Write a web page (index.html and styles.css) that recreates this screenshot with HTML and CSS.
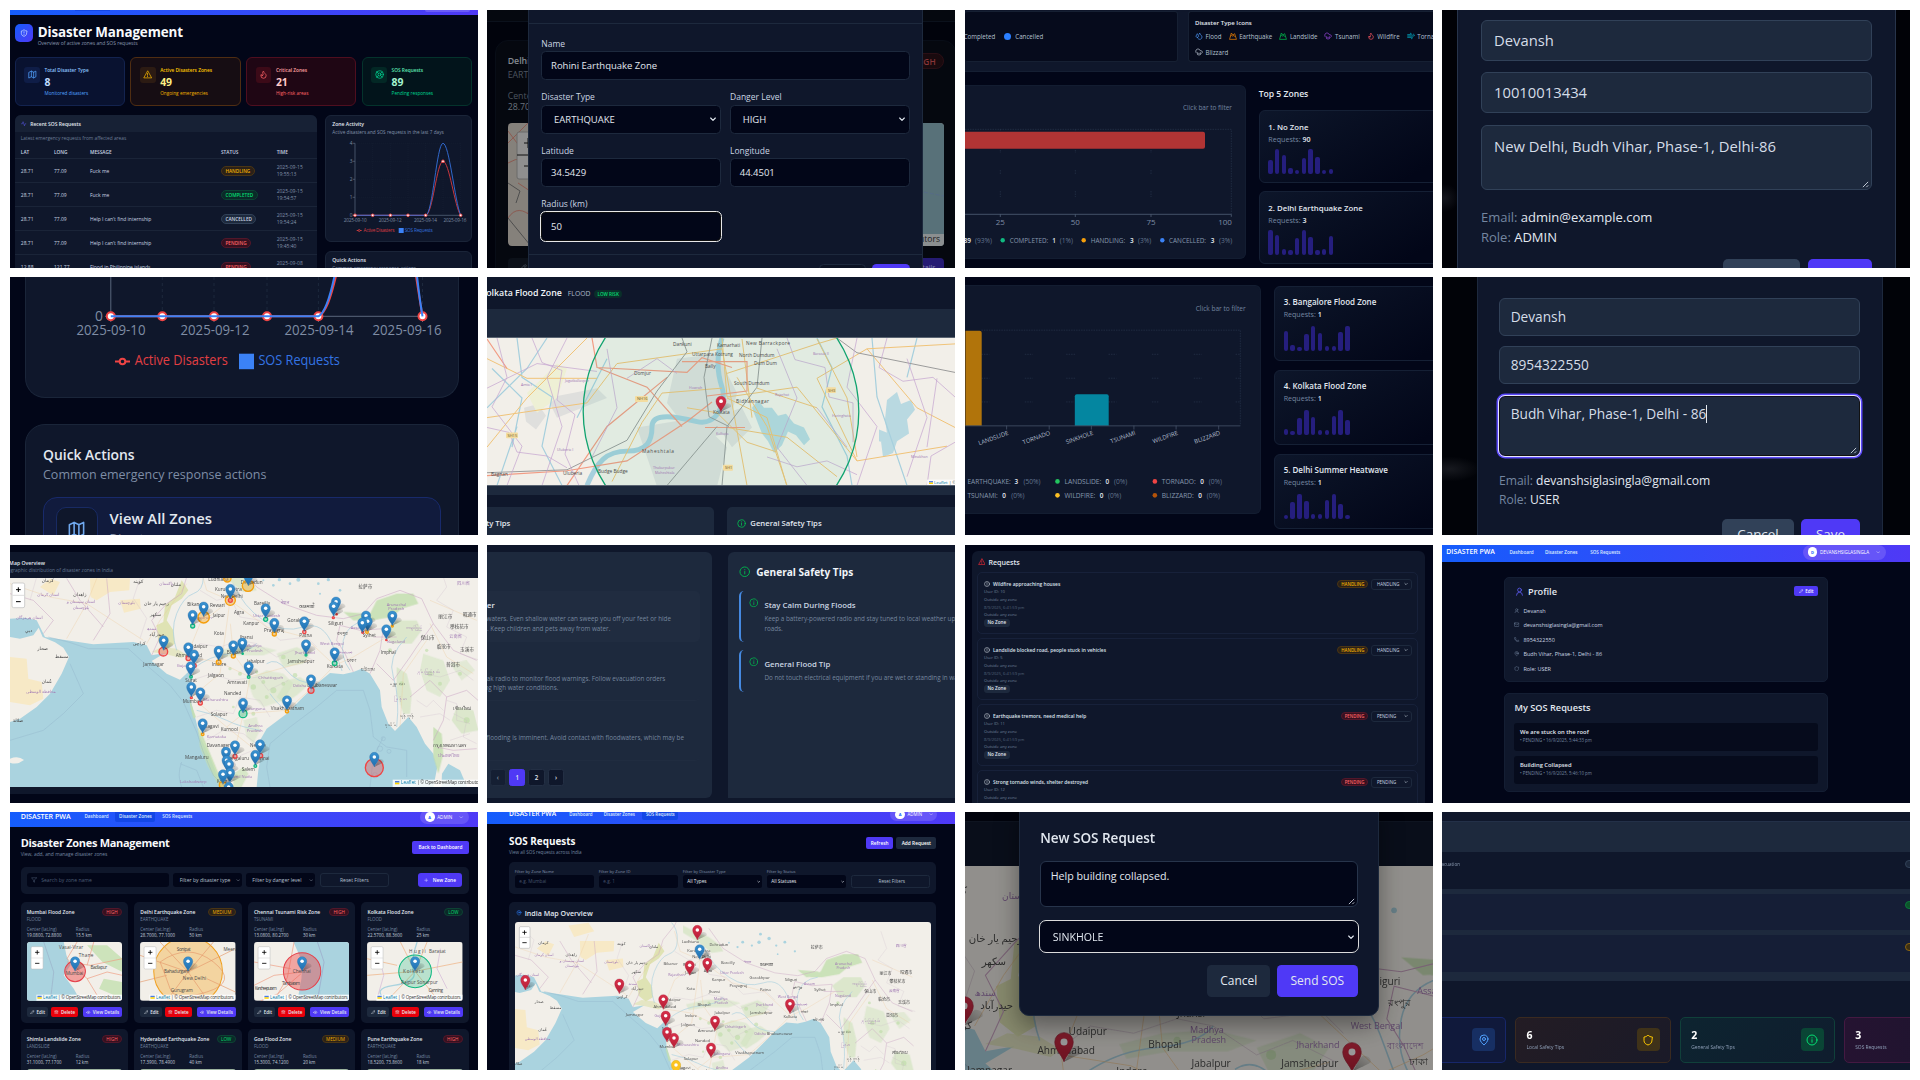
FILE: index.html
```html
<!DOCTYPE html>
<html lang="en">
<head>
<meta charset="utf-8">
<title>Disaster PWA</title>
<link rel="stylesheet" href="styles.css">
</head>
<body>
<svg class="defs" width="0" height="0" aria-hidden="true">
  <defs>
    <symbol id="i-map" viewBox="0 0 24 24"><path d="M3 6l6-3 6 3 6-3v15l-6 3-6-3-6 3zM9 3v15M15 6v15"/></symbol>
    <symbol id="i-alert" viewBox="0 0 24 24"><path d="M12 3L2 21h20zM12 9v5M12 17v.5"/></symbol>
    <symbol id="i-flame" viewBox="0 0 24 24"><path d="M8.5 14.5A2.5 2.5 0 0 0 11 12c0-1.4-.5-2-1-3-1-2.100-.2-4 2-6 .5 2.500 2 4.900 4 6.500s3 3.500 3 5.500a7 7 0 1 1-14 0c0-1.200.4-2.300 1-3a2.500 2.500 0 0 0 2.500 2.500z"/></symbol>
    <symbol id="i-buoy" viewBox="0 0 24 24"><circle cx="12" cy="12" r="10"/><circle cx="12" cy="12" r="4"/><path d="M5 5l4 4M15 9l4-4M15 15l4 4M9 15l-4 4"/></symbol>
    <symbol id="i-shieldalert" viewBox="0 0 24 24"><path d="M20 13c0 5-3.500 7.500-8 9-4.500-1.500-8-4-8-9V6c3 0 6-1.500 8-4 2 2.500 5 4 8 4zM12 8v4M12 16v.3"/></symbol>
    <symbol id="i-shield" viewBox="0 0 24 24"><path d="M20 13c0 5-3.500 7.500-8 9-4.500-1.500-8-4-8-9V6c3 0 6-1.500 8-4 2 2.500 5 4 8 4z"/></symbol>
    <symbol id="i-activity" viewBox="0 0 24 24"><path d="M22 12h-4l-3 9L9 3l-3 9H2"/></symbol>
    <symbol id="i-info" viewBox="0 0 24 24"><circle cx="12" cy="12" r="10"/><path d="M12 16.500v-5M12 7.500v.5"/></symbol>
    <symbol id="i-alertc" viewBox="0 0 24 24"><circle cx="12" cy="12" r="10"/><path d="M12 7v6M12 16.500v.3"/></symbol>
    <symbol id="i-user" viewBox="0 0 24 24"><circle cx="12" cy="8" r="5"/><path d="M4 22a8 8 0 0 1 16 0"/></symbol>
    <symbol id="i-mail" viewBox="0 0 24 24"><rect x="2" y="4" width="20" height="16" rx="2"/><path d="M2 7l10 6 10-6"/></symbol>
    <symbol id="i-phone" viewBox="0 0 24 24"><path d="M22 17v3a2 2 0 0 1-2 2C11 21 3 13 2 4a2 2 0 0 1 2-2h3l2 6-2 2a14 14 0 0 0 7 7l2-2z"/></symbol>
    <symbol id="i-pin" viewBox="0 0 24 24"><path d="M20 10c0 5-5.500 10-8 12-2.500-2-8-7-8-12a8 8 0 0 1 16 0z"/><circle cx="12" cy="10" r="3"/></symbol>
    <symbol id="i-pencil" viewBox="0 0 24 24"><path d="M17 3a2.800 2.800 0 0 1 4 4L7.500 20.500 2 22l1.500-5.500zM15 5l4 4"/></symbol>
    <symbol id="i-trash" viewBox="0 0 24 24"><path d="M3 6h18M19 6v14a2 2 0 0 1-2 2H7a2 2 0 0 1-2-2V6M8 6V4a2 2 0 0 1 2-2h4a2 2 0 0 1 2 2v2M10 11v6M14 11v6"/></symbol>
    <symbol id="i-eye" viewBox="0 0 24 24"><path d="M2 12c4-9 16-9 20 0-4 9-16 9-20 0z"/><circle cx="12" cy="12" r="3"/></symbol>
    <symbol id="i-plus" viewBox="0 0 24 24"><path d="M4 12h16M12 4v16"/></symbol>
    <symbol id="i-filter" viewBox="0 0 24 24"><path d="M22 3H2l8 9.500V19l4 2v-8.500z"/></symbol>
    <symbol id="i-drops" viewBox="0 0 24 24"><path d="M7 16.300c2.200 0 4-1.800 4-4C11 9.500 7.500 8 7 5c-.5 3-4 4.500-4 7.300 0 2.200 1.800 4 4 4zM12.600 6.600A11 11 0 0 0 14 3c.5 2.500 2 5 4 6.500s3 3.500 3 5.500a7 7 0 0 1-12 5"/></symbol>
    <symbol id="i-mount" viewBox="0 0 24 24"><path d="M2 21L7 3l5 6 5-4 5 16zM5 12l3-3 3 4 3-3 4 4"/></symbol>
    <symbol id="i-cloud" viewBox="0 0 24 24"><path d="M4 14.900A7 7 0 1 1 15.700 8h1.800a4.500 4.500 0 0 1 2.500 8.200M16 14v6M8 14v6M12 16v6"/></symbol>
    <symbol id="i-wind" viewBox="0 0 24 24"><path d="M17.700 7.700A2.500 2.500 0 1 1 19.500 12H2M9.600 4.600A2 2 0 1 1 11 8H2M12.600 19.400A2 2 0 1 0 14 16H2"/></symbol>
    <symbol id="i-chev" viewBox="0 0 24 24"><path d="M5 9l7 7 7-7"/></symbol>
    <linearGradient id="gb" x1="0" y1="0" x2="0" y2="1"><stop offset="0" stop-color="#3a93d2"/><stop offset="1" stop-color="#1f6dad"/></linearGradient>
    <linearGradient id="gr" x1="0" y1="0" x2="0" y2="1"><stop offset="0" stop-color="#d8304a"/><stop offset="1" stop-color="#b51f36"/></linearGradient>
    <linearGradient id="gs" x1="0" y1="1" x2="1" y2="0"><stop offset="0" stop-opacity=".4"/><stop offset="1" stop-opacity=".05"/></linearGradient>
    <g id="shade"><path d="M0 0C6-6 8-16 16-24A10 8 0 0 1 28-14C20-9 8-4 0 0z" fill="url(#gs)"/></g>
    <g id="pb"><use href="#shade"/><path d="M0 0C-3-10-14-18-14-30A14 14 0 0 1 14-30C14-18 3-10 0 0z" fill="url(#gb)" stroke="#2767a0" stroke-width="1"/><circle cy="-30" r="5.300" fill="#fff"/></g>
    <g id="pr"><use href="#shade"/><path d="M0 0C-3-10-14-18-14-30A14 14 0 0 1 14-30C14-18 3-10 0 0z" fill="url(#gr)" stroke="#a3213a" stroke-width="1"/><circle cy="-30" r="5.300" fill="#fff"/></g>
    <g id="py"><use href="#shade"/><path d="M0 0C-3-10-14-18-14-30A14 14 0 0 1 14-30C14-18 3-10 0 0z" fill="#fcc41f" stroke="#c89a10" stroke-width="1"/><circle cy="-30" r="5.300" fill="#fff"/></g>
    <g id="zoomctl"><rect x="12" y="14" width="36" height="67" rx="4" fill="#fff" stroke="#bbb" stroke-width="1.500"/><path d="M12 48h36" stroke="#ccc" stroke-width="1.500"/><path d="M24 31h13M30.500 24.500v13M24 64h13" stroke="#000" stroke-width="2.500"/></g>
    <g id="attr"><rect x="28" y="158" width="258" height="18" fill="#fff" opacity=".85"/><path d="M31 161h13v4.500h-13z" fill="#4c7be1"/><path d="M31 165.500h13v4.500h-13z" fill="#ffd500"/><text x="48" y="171" font-size="13.500" fill="#0078a8" textLength="42">Leaflet</text><text x="93" y="171" font-size="13.500" fill="#333" textLength="188">| © OpenStreetMap contributors</text></g>

    <g id="india">
      <rect x="-100" y="-50" width="1700" height="1000" fill="#f2efe9"/>
      <path d="M-80 200L30 235 75 232 110 240 135 290 200 300 280 312 400 305 440 315 455 345 495 338 455 362 500 400 540 418 570 390 578 410 570 440 572 480 585 530 600 590 630 650 665 740 700 830 740 800 770 740 775 690 783 640 780 600 800 565 860 520 900 480 950 430 990 398 1030 402 1060 395 1085 385 1110 400 1140 450 1145 500 1165 550 1185 572 1225 530 1250 560 1275 610 1300 640 1312 680 1300 740 1290 900 -100 900-100 540 30 545 60 535 110 500 150 460 185 400 207 350 190 322 165 306 128 290 116 262 100 285 60 295 30 290-80 300z" fill="#aad3df"/>
      <path d="M1322 780L1326 700 1345 670 1380 690 1410 760z" fill="#aad3df"/>
      <path d="M30 655q25-10 42 4-20 16-42 8z" fill="#f2efe9"/>
      <g fill="#f7e9c6">
        <path d="M270 114L390 114 388 150 330 155 290 180 272 170z"/><path d="M360 180l60-5 2 30-50 12z"/><path d="M30 350l50 5 5 60 40 10 5 50-40 20-60-10z"/><path d="M120 140l30-25 30 10-20 40zM230 60l70-10 20 30-70 20z"/>
      </g>
      <path d="M545 120l20 30-20 25-30 20-15 45 20 30 5 40-25 15-25-20-5-50 20-10 5-50 30-25z" fill="#dfe3b4"/>
      <path d="M455 335l30-15 45 5 30 18-15 10-50-12z" fill="#dfe3b4" opacity=".7"/>
      <g fill="#c4dfb0" opacity=".85">
        <path d="M1070 240l40-20 20-40 60-20 50 0 15 30-50 15-30 25-60 10z"/><path d="M1150 270l40-30 60 0 15 30-30 40-60 0z" opacity=".6"/><path d="M1030 215l70 5 20 15-60 5z"/>
        <path d="M630 60l40 20 50 20 40 30 10 20-40 5-50-40-50-30z" opacity=".6"/>
        <path d="M595 560l15 30 25 60 25 60 20 30-15 10-40-70-25-60z"/><path d="M700 700l30-20 15 20-20 40-25 5z" opacity=".7"/>
        <path d="M740 420l60-30 50 10 30 30-30 50-60 20-30-30z" opacity=".4"/><path d="M830 340l60-20 40 20-20 30-60 10z" opacity=".5"/>
        <path d="M640 335l60-15 70-5 60 15-40 15-80 0-60 10z" opacity=".45"/><path d="M860 420l40-10 30 20-40 35-40 25-20-20z" opacity=".5"/><path d="M730 540l40-10 10 40-20 40-20-20z" opacity=".4"/>
        <path d="M1190 380l30 20 15 60-5 60-20 0-20-60z" opacity=".6"/><path d="M1270 340l60 20 20 60-30 50-40-20-20-60z" opacity=".45"/><path d="M1300 560l25 20 5 60-15 60-15-50z"/><path d="M1370 500l50 10 15 60-50 10-30-40z" opacity=".6"/><path d="M1350 370l50-10 25 30-40 30z" opacity=".4"/>
        <path d="M570 480l18 50-8 5-10-40z"/>
      </g>
      <g fill="#bcdca5" opacity=".6"><circle cx="760" cy="440" r="8"/><circle cx="790" cy="425" r="6"/><circle cx="820" cy="450" r="9"/><circle cx="800" cy="470" r="6"/><circle cx="850" cy="430" r="6"/><circle cx="770" cy="395" r="5"/><circle cx="690" cy="385" r="5"/><circle cx="720" cy="400" r="6"/><circle cx="850" cy="350" r="7"/><circle cx="885" cy="405" r="7"/><circle cx="700" cy="500" r="4"/><circle cx="760" cy="520" r="6"/><circle cx="1205" cy="430" r="7"/><circle cx="1290" cy="400" r="8"/><circle cx="1320" cy="430" r="6"/><circle cx="1400" cy="540" r="9"/><circle cx="1380" cy="400" r="6"/><circle cx="1280" cy="330" r="5"/><circle cx="1170" cy="330" r="6"/><circle cx="720" cy="330" r="5"/></g>
      <g fill="none" stroke="#abd0df" stroke-width="2.200">
        <path d="M530 330q-20-60 0-110t50-60 30-50-20-60M700 130q30 70 90 110t120 20 90 60 25 70M1100 240q-60 10-70 60t20 90M580 385q50-40 110-45t80-30M780 570q-60-10-100-30t-90-30M950 430q-60 0-90-40t-60-20M1190 560q10-90-10-150t40-120M870 520q-40-30-60-60"/>
      </g>
      <g fill="#aad3df"><circle cx="820" cy="135" r="4"/><circle cx="838" cy="118" r="5"/><circle cx="870" cy="130" r="4"/><circle cx="895" cy="118" r="6"/><circle cx="790" cy="120" r="3"/><circle cx="930" cy="105" r="6"/><circle cx="955" cy="130" r="4"/><circle cx="985" cy="118" r="5"/><circle cx="900" cy="90" r="5"/><circle cx="1020" cy="150" r="4"/><circle cx="960" cy="160" r="3"/></g>
      <g fill="none" stroke="#efc48d" stroke-width="1.100" opacity=".8">
        <path d="M575 470L660 400 690 180M690 180L800 260 913 290 1004 375M575 470L680 560 780 640M690 180L600 250 560 350 575 470M680 560L730 520 860 510 950 430 1004 375M656 365L750 410 930 360M700 650L730 520 750 410M690 180L620 150 600 80M440 310L480 240 560 130M30 130L150 170 260 190 430 300M200 295L260 190 300 90M1004 375L1060 350 1160 290M1290 250L1340 350 1420 400M1200 560L1210 400 1280 300M1290 180L1430 240M750 410L700 340 691 250M560 350L656 365"/>
      </g>
      <g fill="none" stroke="#c9a3c2" stroke-width="1.500">
        <path d="M455 345L480 290 455 240 500 190 545 160 560 110 600 60 620 20M720 70L770 140 850 190 950 225 1030 235 1090 220 1130 175 1200 150 1265 175M1060 395L1035 340 1010 300 1020 255 1080 270 1150 265 1140 330 1110 400M1265 175L1300 250 1250 320 1230 350 1180 420 1130 370M1300 250L1360 330 1430 360M1230 470L1290 420 1340 470 1330 540 1300 600M320 114L330 220 280 300M200 114L240 180 310 260M30 160L100 180 160 240 130 280M1340 470L1400 450 1434 480M1120 290L1190 290M1310 620l50 10 70-5"/>
      </g>
      <g fill="none" stroke="#c8b4c6" stroke-width=".9" opacity=".85">
        <path d="M600 150l50 30 40-10 30 60 60 10 60 60 80-10 30 30M560 340l40-30 60 10 60-20 50 10 60 40 50-20 60 30M575 420l60-20 60 20 80-10 30 40 60-30M590 530l60-20 50 10 20-50 60 10 30 50M620 600l50-30 60 10 40 30M690 700l20-50 50-20M1320 80l20 60-30 40 50 30-20 50 60 30-20 50 60 20M1250 480l30 20 20-20 30 30M1260 530l60-10 30 20M1360 520l40 20-10 50 40 20M60 60l50 50-20 70M420 114l-20 60 40 60-20 60M1340 480l30 10 0 50 40 10M1350 600l60-20M1270 400l50 10 60-20 40 30"/>
      </g>
      <g fill="none" stroke="#92b5cb" stroke-width="1.500" opacity=".8">
        <path d="M145 290l60 15 60 20 120 0 55 50 70 60 40 50 40 90 20 60 30 70 60 60M210 370l40 90-60 60-60 50-100 30M810 740l-10-60 10-70 60-50 80-60 60-50 80 0 20 60 10 80 40 30 60 10 0 80M540 670l50 20 20 50M545 665q-15 40 0 75M1110 740l10-90 30-60"/>
        <circle cx="1150" cy="595" r="6"/><circle cx="1167" cy="633" r="6"/><circle cx="1140" cy="625" r="8"/><circle cx="1125" cy="705" r="8"/>
      </g>
      <g class="city">
        <text x="625" y="122">Ludhiana</text><text x="645" y="152">Kurukshetra</text><text x="662" y="173">New Delhi</text><text x="722" y="131">Dehradun</text><text x="562" y="196">Bikaner</text><text x="630" y="200">Rewari</text><text x="702" y="222">Agra</text><text x="638" y="230">Jaipur</text><text x="730" y="254">Kanpur</text><text x="762" y="194">Bareilly</text><text x="792" y="276">Prayagraj</text><text x="862" y="245">Gorakhpur</text><text x="898" y="289">Patna</text><text x="642" y="284">Kota</text><text x="680" y="341">Bhopal</text><text x="570" y="322">Udaipur</text><text x="527" y="349">Ahmedabad</text><text x="430" y="377">Jamnagar</text><text x="636" y="378">Indore</text><text x="740" y="367">Jabalpur</text><text x="864" y="367">Jamshedpur</text><text x="980" y="382">Kolkata</text><text x="624" y="410">Jalgaon</text><text x="556" y="424">Surat</text><text x="682" y="432">Amravati</text><text x="672" y="465">Nanded</text><text x="548" y="488">Mumbai</text><text x="812" y="508">Visakhapatnam</text><text x="922" y="441">Bhubaneswar</text><text x="632" y="528">Solapur</text><text x="602" y="562">Belagavi</text><text x="662" y="571">Kurnool</text><text x="620" y="621">Davanagere</text><text x="750" y="620">Nellore</text><text x="555" y="656">Mangaluru</text><text x="725" y="691">Salem</text><text x="680" y="660">Bengaluru</text><text x="755" y="660">Chennai</text><text x="650" y="729">Kochi</text><text x="985" y="253">Siliguri</text><text x="1088" y="289">Sylhet</text><text x="720" y="297">Jhansi</text><text x="1300" y="619">กรุงเทพมหานคร</text>
        <text x="125" y="124">کرمان</text><text x="220" y="168">زاهدان</text><text x="400" y="128">کویته</text><text x="512" y="137">ملتان</text><text x="432" y="194">رحیم یار خان</text><text x="450" y="226">سکھر</text><text x="448" y="286">حیدرآباد</text><text x="398" y="314">کراچی</text><text x="75" y="276">دبي</text><text x="112" y="330">صحار</text><text x="165" y="352">مسقط</text><text x="125" y="427">عُمان</text><text x="38" y="546">صلالة</text>
        <text x="1315" y="232">丽江市</text><text x="1388" y="228">昭通市</text><text x="1350" y="262">攀枝花市</text><text x="1262" y="296">保山市</text><text x="1310" y="322">临沧市</text><text x="1380" y="332">玉溪市</text><text x="1338" y="378">普洱市</text><text x="1075" y="143">拉萨市</text><text x="898" y="202">काठमाडौं</text><text x="1012" y="283">রংপুর</text><text x="1040" y="364">ঢাকা</text><text x="1082" y="392">চট্টগ্রাম</text><text x="1142" y="342">Imphal</text><text x="1166" y="434">မန္တလေး</text><text x="1200" y="530">ရန်ကုန်</text><text x="1155" y="558">ပုသိမ်</text><text x="1360" y="508">เชียงใหม่</text>
      </g>
      <g class="state">
        <text x="478" y="135">پاکستان</text><text x="200" y="188">استان سیستان و</text><text x="218" y="206">بلوچستان</text><text x="112" y="166">استان کرمان</text><text x="48" y="235">استان هرمزگان</text><text x="355" y="192">بلوچستان</text><text x="842" y="190">नेपाल</text><text x="760" y="230">Uttar Pradesh</text><text x="775" y="416">Chhattisgarh</text><text x="610" y="481">Maharashtra</text><text x="620" y="592">Karnataka</text><text x="745" y="560">Andhra</text><text x="740" y="574">Pradesh</text><text x="738" y="320">Madhya</text><text x="740" y="334">Pradesh</text><text x="878" y="441">Odisha</text><text x="885" y="340">Jharkhand</text><text x="960" y="314">West Bengal</text><text x="1010" y="342">বাংলাদেশ</text><text x="1160" y="196">Arunachal</text><text x="1165" y="210">Pradesh</text><text x="1052" y="266">Assam</text><text x="1215" y="267">ကချင်ပြည်</text><text x="1160" y="308">Nagaland</text><text x="1182" y="480">မြန်မာ</text><text x="530" y="380">Gujarat</text><text x="735" y="510">Telangana</text><text x="690" y="712">Tamil Nadu</text><text x="540" y="727">Lakshadweep</text><text x="578" y="236">Rajasthan</text><text x="78" y="458">محافظة الوسطى</text><text x="1348" y="292">云南省</text><text x="1372" y="135">四川省</text><text x="1250" y="398">ရှမ်းပြည်နယ်</text><text x="1314" y="650">ประเทศไทย</text><text x="440" y="268">سندھ</text>
      </g>
    </g>
  </defs>
</svg>

<main class="board">

<!-- Dashboard -->
<section class="tile t1">
  <div class="strip"><i class="strip-on"></i><i class="strip-pill"></i></div>
  <header class="t1-head"><span class="logo"><svg class="ic"><use href="#i-shieldalert"/></svg></span><div><h1>Disaster Management</h1><p>Overview of active zones and SOS requests</p></div></header>
  <div class="stats">
    <div class="stat blue"><span><svg class="ic"><use href="#i-map"/></svg></span><div><b>Total Disaster Type</b><strong>8</strong><em>Monitored disasters</em></div></div>
    <div class="stat amber"><span><svg class="ic"><use href="#i-alert"/></svg></span><div><b>Active Disasters Zones</b><strong>49</strong><em>Ongoing emergencies</em></div></div>
    <div class="stat red"><span><svg class="ic"><use href="#i-flame"/></svg></span><div><b>Critical Zones</b><strong>21</strong><em>High-risk areas</em></div></div>
    <div class="stat green"><span><svg class="ic"><use href="#i-buoy"/></svg></span><div><b>SOS Requests</b><strong>89</strong><em>Pending responses</em></div></div>
  </div>
  <div class="t1-cols">
    <div class="recent">
      <h2><svg class="ic"><use href="#i-activity"/></svg>Recent SOS Requests</h2>
      <p>Latest emergency requests from affected areas</p>
      <div class="tr th"><span>LAT</span><span>LONG</span><span>MESSAGE</span><span>STATUS</span><span>TIME</span></div>
      <div class="tr"><span>28.71</span><span>77.09</span><span>Fuck me</span><span><i class="pill p-h">HANDLING</i></span><time>2025-09-15<br>19:55:13</time></div>
      <div class="tr"><span>28.71</span><span>77.09</span><span>Fuck me</span><span><i class="pill p-c">COMPLETED</i></span><time>2025-09-15<br>19:54:57</time></div>
      <div class="tr"><span>28.71</span><span>77.09</span><span>Help I can't find internship</span><span><i class="pill p-x">CANCELLED</i></span><time>2025-09-15<br>19:54:24</time></div>
      <div class="tr"><span>28.71</span><span>77.09</span><span>Help I can't find internship</span><span><i class="pill p-p">PENDING</i></span><time>2025-09-15<br>19:45:40</time></div>
      <div class="tr"><span>12.88</span><span>121.77</span><span>Flood in Philippine islands</span><span><i class="pill p-p">PENDING</i></span><time>2025-09-08<br>10:12:03</time></div>
    </div>
    <div class="side">
      <div class="panel act">
        <h3>Zone Activity</h3><p>Active disasters and SOS requests in the last 7 days</p>
        <svg class="chart" viewBox="315.300 128 146.700 100" width="146.700" height="100">
          <g stroke="#1b2639" stroke-width=".4" stroke-dasharray="1 1" fill="none"><path d="M344 132.300H450M344 150.300H450M344 168.300H450M344 186.300H450M362 132V204M379.700 132V204M397.300 132V204M415 132V204M432.300 132V204M450 132V204"/></g>
          <path d="M342 132.300h2.300v72H450M342 150.300h2.300M342 168.300h2.300M342 186.300h2.300M342 204.300h2.300" fill="none" stroke="#5c6b82" stroke-width=".7"/>
          <path d="M344.300 204.300H415C422 204 426 150.300 432.300 150.300S444 196 450 204.300" fill="none" stroke="#dc3a40" stroke-width=".9"/>
          <path d="M344.300 204.300H415C422 204 426 132.300 432.300 132.300S444 190 450 204.300" fill="none" stroke="#3470dd" stroke-width=".9"/>
          <g fill="#fff" stroke="#ef4444" stroke-width=".9"><circle cx="344.300" cy="204.300" r="1.300"/><circle cx="362" cy="204.300" r="1.300"/><circle cx="379.700" cy="204.300" r="1.300"/><circle cx="397.300" cy="204.300" r="1.300"/><circle cx="415" cy="204.300" r="1.300"/><circle cx="432.300" cy="150.300" r="1.300"/><circle cx="450" cy="204.300" r="1.300"/></g>
          <g fill="#7d8ca3" font-size="4.700"><text x="339" y="134">4</text><text x="339" y="152">3</text><text x="339" y="170">2</text><text x="339" y="188">1</text><text x="339" y="206">0</text><text x="333" y="211" textLength="23">2025-09-10</text><text x="368" y="211" textLength="23">2025-09-12</text><text x="403.300" y="211" textLength="23">2025-09-14</text><text x="432.700" y="211" textLength="23">2025-09-16</text></g>
          <path d="M346 219.500h5" stroke="#ef4444" stroke-width=".8"/><circle cx="348.500" cy="219.500" r="1" fill="#0f172b" stroke="#ef4444" stroke-width=".7"/>
          <text x="352.700" y="221" font-size="4.700" fill="#d63c42" textLength="31">Active Disasters</text><rect x="388" y="217" width="5" height="5" fill="#3b82f6"/><text x="394" y="221" font-size="4.700" fill="#3470dd" textLength="28">SOS Requests</text>
        </svg>
      </div>
      <div class="panel qa"><h3>Quick Actions</h3><p>Common emergency response actions</p></div>
    </div>
  </div>
</section>

<!-- New zone dialog -->
<section class="tile t2">
  <div class="t2-bar"></div>
  <div class="t2-card">
    <div class="t2-row"><b>Delhi Zone</b><i class="pill">HIGH</i></div>
    <p>EARTHQUAKE</p><p class="gap">Center</p><p class="v">28.7041</p>
    <svg width="436" height="123" viewBox="0 0 436 123" class="t2-map"><rect width="436" height="123" fill="#85817b"/><rect x="300" width="136" height="123" fill="#587179"/><path d="M0 20L20 0M0 40q15-10 30 5M0 95q10-15 25 0M0 8l15 20M10 60l15 10-5 20" fill="none" stroke="#8d5046" stroke-width=".8"/><path d="M0 95L22 122M0 60l12 8-4 12" stroke="#4e4e4e" fill="none"/><path d="M410 68l26 5" stroke="#56698a" stroke-width=".8" stroke-dasharray="4 2"/><rect x="9" y="9" width="26" height="47" rx="2" fill="#8f8f8f" stroke="#6a6a6a"/><path d="M9 32h26M16 20h9M16 43h9M20 15v10" stroke="#111" stroke-width="1"/><rect x="380" y="111" width="56" height="12" fill="#8b8f90"/><text x="432" y="119" text-anchor="end" font-size="8.500" fill="#202020">contributors</text></svg>
    <div class="t2-foot"><i><svg class="ic"><use href="#i-pencil"/></svg></i><i class="v">View Details</i></div>
  </div>
  <div class="dialog d2">
    <div class="d2-head"></div>
    <div class="d2-body">
      <label class="wide">Name<span>Rohini Earthquake Zone</span></label>
      <label>Disaster Type<span class="sel">EARTHQUAKE<svg class="ic"><use href="#i-chev"/></svg></span></label>
      <label>Danger Level<span class="sel">HIGH<svg class="ic"><use href="#i-chev"/></svg></span></label>
      <label>Latitude<span>34.5429</span></label>
      <label>Longitude<span>44.4501</span></label>
      <label>Radius (km)<span class="focus">50</span></label>
    </div>
    <div class="d2-foot"><i></i><i class="go"></i></div>
  </div>
</section>

<!-- SOS status chart -->
<section class="tile t3">
  <div class="legendbar">
    <div class="lbox lb1"><span class="done">Completed</span><i></i><span>Cancelled</span></div>
    <div class="lbox lb2"><b>Disaster Type Icons</b>
      <div class="types">
        <span><svg class="ic" color="#4f9bff"><use href="#i-drops"/></svg>Flood</span><span><svg class="ic" color="#fe8a00"><use href="#i-mount"/></svg>Earthquake</span><span><svg class="ic" color="#00c950"><use href="#i-mount"/></svg>Landslide</span><span><svg class="ic" color="#a64dee"><use href="#i-cloud"/></svg>Tsunami</span><span><svg class="ic" color="#fb5660"><use href="#i-flame"/></svg>Wildfire</span><span><svg class="ic" color="#00c3dc"><use href="#i-wind"/></svg>Tornado</span>
      </div>
      <div class="types"><span><svg class="ic" color="#cad5e2"><use href="#i-cloud"/></svg>Blizzard</span></div>
    </div>
  </div>
  <div class="t3-main">
    <div class="chartcard">
      <svg viewBox="0 75 281 174" width="281" height="174">
        <text x="267" y="99.700" text-anchor="end" font-size="6.400" fill="#7486a0" textLength="49" lengthAdjust="spacingAndGlyphs">Click bar to filter</text>
        <path d="M0 119.300H266.300V204M35.300 119v2M35.300 140v3M35.300 160v5M35.300 181v6M110.300 119v2M110.300 140v3M110.300 160v5M110.300 181v6M186 119v2M186 140v3M186 160v5M186 181v6" fill="none" stroke="#2b3950" stroke-width=".6" stroke-dasharray="1.500 1"/>
        <path d="M0 121.700h238a2 2 0 0 1 2 2v13a2 2 0 0 1-2 2H0z" fill="#b13434"/>
        <path d="M0 204.300H266.300v2.500M35.300 204v3M110.300 204v3M186 204v3" fill="none" stroke="#4a586e" stroke-width=".9"/>
        <g fill="#7e8da5" font-size="8" text-anchor="middle"><text x="35.300" y="215">25</text><text x="110.300" y="215">50</text><text x="186" y="215">75</text><text x="260" y="215">100</text></g>
        <g font-size="6.400" fill="#8797ae"><text x="-1.500" y="232.700" fill="#e6ebf2" font-weight="600" textLength="7.500" lengthAdjust="spacingAndGlyphs">89</text><text x="10" y="232.700" fill="#62748e" textLength="17" lengthAdjust="spacingAndGlyphs">(93%)</text><circle cx="37.700" cy="230.300" r="2.200" fill="#10b981"/><text x="44.700" y="232.700" textLength="38.500" lengthAdjust="spacingAndGlyphs">COMPLETED:</text><text x="87.300" y="232.700" fill="#e6ebf2" font-weight="600">1</text><text x="94.700" y="232.700" fill="#62748e" textLength="13.300" lengthAdjust="spacingAndGlyphs">(1%)</text><circle cx="118.700" cy="230.300" r="2.200" fill="#f59e0b"/><text x="125.700" y="232.700" textLength="34.500" lengthAdjust="spacingAndGlyphs">HANDLING:</text><text x="165" y="232.700" fill="#e6ebf2" font-weight="600">3</text><text x="173" y="232.700" fill="#62748e" textLength="13.300" lengthAdjust="spacingAndGlyphs">(3%)</text><circle cx="197.300" cy="230.300" r="2.200" fill="#3b82f6"/><text x="204" y="232.700" textLength="37" lengthAdjust="spacingAndGlyphs">CANCELLED:</text><text x="245.700" y="232.700" fill="#e6ebf2" font-weight="600">3</text><text x="254" y="232.700" fill="#62748e" textLength="13.300" lengthAdjust="spacingAndGlyphs">(3%)</text></g>
      </svg>
    </div>
    <div class="zones">
      <h2>Top 5 Zones</h2>
      <div class="zone"><b>1. No Zone</b><p>Requests: <strong>90</strong></p><div class="bars"><i style="height:14px"></i><i style="height:24.700px"></i><i style="height:19.300px"></i><i style="height:6px"></i><i style="height:4px"></i><i style="height:16px"></i><i style="height:24.700px"></i><i style="height:17px"></i><i style="height:4px"></i><i style="height:5px"></i></div></div>
      <div class="zone"><b>2. Delhi Earthquake Zone</b><p>Requests: <strong>3</strong></p><div class="bars"><i style="height:25.300px"></i><i style="height:20px"></i><i style="height:6px"></i><i style="height:4.700px"></i><i style="height:17px"></i><i style="height:25.300px"></i><i style="height:18px"></i><i style="height:5px"></i><i style="height:5.700px"></i><i style="height:19px"></i></div></div>
    </div>
  </div>
</section>

<!-- Edit profile, admin -->
<section class="tile t4">
  <div class="dialog pf"><div class="inp">Devansh</div><div class="inp">10010013434</div><div class="inp area">New Delhi, Budh Vihar, Phase-1, Delhi-86<svg class="grip" viewBox="0 0 8 8"><path d="M1 7l6-6M5 7l2-2"/></svg></div>
    <p>Email: <b>admin@example.com</b></p><p>Role: <b>ADMIN</b></p><div class="acts"><i></i><i class="go"></i></div></div>
</section>

<!-- Activity detail -->
<section class="tile t5">
  <div class="panel5 up">
    <svg viewBox="15 0 434 120" width="434" height="120">
      <path d="M152.300 0v39M257 0v39M204 0v39M308.400 0v39M412.500 0v39" stroke="#1d293d" stroke-width="1" stroke-dasharray="3 3"/>
      <path d="M100.800 0v45M95 39.300H412.500V45M204 39v6M308.400 39v6" fill="none" stroke="#59677c" stroke-width="1"/>
      <path d="M100.800 39.300H308.400C316 36 321 20 326 -1M406 -1Q410 25 412.500 39.300" fill="none" stroke="#ef4444" stroke-width="2"/>
      <g fill="#fff" stroke="#ef4444" stroke-width="2"><circle cx="100.800" cy="39.300" r="4"/><circle cx="152.300" cy="39.300" r="4"/><circle cx="204" cy="39.300" r="4"/><circle cx="257" cy="39.300" r="4"/><circle cx="308.400" cy="39.300" r="4"/><circle cx="412.500" cy="39.300" r="4"/></g>
      <path d="M100.800 39.300H308.400C315 36 320 20 324.500 -1M407 -1Q410 25 412.500 39.300" fill="none" stroke="#3b82f6" stroke-width="2"/>
      <g fill="#7f8da4" font-size="13.800"><text x="85" y="43.500">0</text><text x="66.500" y="57.500" textLength="69" lengthAdjust="spacingAndGlyphs">2025-09-10</text><text x="170.500" y="57.500" textLength="69" lengthAdjust="spacingAndGlyphs">2025-09-12</text><text x="274.500" y="57.500" textLength="69" lengthAdjust="spacingAndGlyphs">2025-09-14</text><text x="362.500" y="57.500" textLength="69" lengthAdjust="spacingAndGlyphs">2025-09-16</text></g>
      <path d="M105 84.500h15" stroke="#ef4444" stroke-width="2"/><circle cx="112.500" cy="84.500" r="2.800" fill="#0f172b" stroke="#ef4444" stroke-width="2"/>
      <text x="124.700" y="88" font-size="13.600" fill="#e13f43" textLength="93" lengthAdjust="spacingAndGlyphs">Active Disasters</text><rect x="229" y="76.700" width="15" height="15.500" fill="#3b82f6"/><text x="248.400" y="88" font-size="13.600" fill="#3474e4" textLength="81.500" lengthAdjust="spacingAndGlyphs">SOS Requests</text>
    </svg>
  </div>
  <div class="panel5 down"><h3>Quick Actions</h3><p>Common emergency response actions</p><div class="qbtn"><span><svg class="ic"><use href="#i-map"/></svg></span><div><b>View All Zones</b><em>Disaster zones</em></div></div></div>
</section>

<!-- Zone detail map -->
<section class="tile t6">
  <header><b>Kolkata Flood Zone</b><span>FLOOD</span><i>LOW RISK</i></header>
  <div class="t6-map">
    <svg viewBox="0 59 468 150" width="468" height="149.500" preserveAspectRatio="none">
      <rect y="59" width="468" height="150" fill="#f2efe9"/>
      <g fill="#dfdfdd"><path d="M190 80l40-5 20 40-10 40-30 10-30-40zM150 150l60-10 30 30-10 40h-60zM60 120l50-10 10 10-50 20zM37 130l14-4 8 12-10 14-10-8zM225 140l30-10 10 20-20 20z"/></g>
      <path d="M50 105l20-20 10 5-10 30-20 15-10-20z" fill="#eef0d5"/>
      <g fill="#aad3df" opacity=".8"><path d="M265 130l6-8 6 8 8 0 6 8 8-2 8 10 10 4 6 12-6 6-8-10-8-4-6 14-8 8-6-12-6-8-4-10zM400 122l10-8 4 12 10-4 4 10-8 10 2 14-12 8-4 12-10 4-2-16 6-8-2-14zM392 152l10 4-2 10-8-2z"/></g>
      <g fill="none" stroke="#a6cfdd"><path d="M235 59c-6 20-5 35 0 50s-5 40-25 35-45-10-45 5-5 25-25 25-30 10-40 35" stroke-width="5"/><path d="M0 130l40-40 20-31M330 59l15 30-10 40 25 50 5 30M10 209l20-60M430 59l-10 40M120 80l-30 60M30 59l5 40 30 20-10 50 20 40M385 59l5 60 30 90M5 90l30 30-10 50" stroke-width="1.200"/></g>
      <g fill="none" stroke="#f0c277" stroke-width="1"><path d="M0 140L100 125 130 85 235 70 260 209M235 59l5 60 70-10 60 75 90-15M370 184L330 100 380 70 468 65M235 110l-60 5-20 30-30 60M0 170l40-50 60-61M240 150l60 10 50 40M240 95l90-30 20-6M300 209l-20-60-30-50M330 60l30 60 10 60M380 70l50 60 38 20M0 80l40 20 70 0M240 120l40 20 20 70M255 60l10 80M200 130l30 5 30 30 30 10M330 130l-60-20"/></g>
      <g fill="none" stroke="#f29b83" stroke-width="1.200"><path d="M0 199l80-5 60-10 60-40 25-20M105 59l5 30 90 5 15-15 30 10M110 89l50 20 35 40M195 83h65v30l-40 5M218 150h40M0 60l20 30M80 209l40-60 60-50"/></g>
      <g fill="none" stroke="#9b9b9b" stroke-width="1"><path d="M0 196l80-3 60-30 30-50 30-40-5-14M235 209l5-60 30-40 5-50M350 59l20 15 98 20M180 209l50-60M225 59l-8 40 5 40 20 10"/></g>
      <g fill="none" stroke="#c3a2cf" stroke-width=".7"><path d="M10 59l10 40-15 30 30 40-15 40M80 59l-20 40 15 50-20 60M120 70l10 60-25 50M290 70l20 50-20 50 30 39M370 59l-10 50 30 40-20 60M420 80l20 60-20 60M450 100l-10 70M140 100l30-20 20 15M330 130l30 40M0 110l50-25 60 8M45 59l10 25 20 8-5 30 18 15-10 40 14 32M0 150l22 5 8 20 30 4 20 12M300 59l8 22 30 8 4 30 24 6 0 40M400 59l-8 30 24 14 30-4 22 20M440 209l4-30 24-14M280 180l30 10 30-6 30 14"/></g>
      <circle cx="234" cy="133.700" r="137.800" fill="#10b981" fill-opacity=".07" stroke="#10a36f" stroke-width="1.300"/>
      <g class="city sm"><text x="259" y="66" textLength="44">New Barrackpore</text><text x="186" y="67">Dankuni</text><text x="230" y="68">Kamarhati</text><text x="205" y="77">Uttarpara Kotrung</text><text x="252" y="78">North Dumdum</text><text x="218" y="90">Bally</text><text x="147" y="97">Domjur</text><text x="247" y="107">South Dumdum</text><text x="249" y="125" textLength="33">Bidhannagar</text><text x="226" y="136">Kolkata</text><text x="155" y="176" textLength="32">Maheshtala</text><text x="76" y="198">Uluberia</text><text x="111" y="196">Budge Budge</text><text x="4" y="199">Bagnan</text><text x="267" y="86">Dum Dum</text></g>
      <g class="state sm"><text x="78" y="104">Jagatballavpur</text><text x="34" y="108">Amta I</text><text x="326" y="76">Barasat II</text><text x="345" y="139">Haringhata</text><text x="424" y="181">Minakhan</text><text x="166" y="192">Thakurpukur</text><text x="168" y="197">Maheshtala</text><text x="202" y="111">Howrah</text><text x="288" y="118">Rajarhat</text><text x="229" y="158">Kolkata</text><text x="70" y="174">Uluberia I</text></g>
      <g fill="#f3dca0"><rect x="148" y="118" width="13" height="6" rx="1"/><rect x="339" y="109" width="10" height="6" rx="1"/><rect x="19" y="155" width="12" height="6" rx="1"/><rect x="236" y="188" width="10" height="6" rx="1"/></g>
      <g font-size="4" fill="#6b5a20"><text x="150" y="122.500">NH16</text><text x="341" y="113.500">SH3</text><text x="20.500" y="159.500">SH15</text><text x="238" y="192.500">SH1</text></g>
      <g transform="translate(234 134) scale(.36)"><use href="#pr"/></g>
      <rect x="440" y="203" width="28" height="6" fill="#fff" opacity=".8"/><text x="447" y="207.500" font-size="4.300" fill="#0078a8">Leaflet</text><path d="M442 204.500h4v1.500h-4z" fill="#4c7be1"/><path d="M442 206h4v1.500h-4z" fill="#ffd500"/><text x="462" y="207.500" font-size="4.300" fill="#333">| ©</text>
    </svg>
  </div>
  <div class="t6-tips"><div class="a"><b>Local Safety Tips</b></div><div class="b"><svg class="ic"><use href="#i-info"/></svg><b>General Safety Tips</b></div></div>
</section>

<!-- Disaster type chart -->
<section class="tile t7">
  <div class="chartcard c7">
    <svg viewBox="0 7 296 230" width="296" height="229.300">
      <text x="281" y="33" text-anchor="end" font-size="6.400" fill="#7486a0" textLength="50" lengthAdjust="spacingAndGlyphs">Click bar to filter</text>
      <g fill="none" stroke="#2b3950" stroke-width=".6" stroke-dasharray="1.500 1"><path d="M16 52.300H275.700V148M16 76.500h8M16 100.500h8M16 124.300h8M59.500 76.500h8M59.500 100.500h8M59.500 124.300h8M101 76.500h9M101 100.500h9M101 124.300h8M143.500 76.500h8M143.500 100.500h8M143.500 124.300h8M187 76.500h7M187 100.500h7M187 124.300h7M229 76.500h8M229 100.500h8M229 124.300h8M271 76.500h5M271 100.500h5M271 124.300h5"/></g>
      <path d="M0 53h14.300a2 2 0 0 1 2 2v93.300H0z" fill="#b1740b"/><path d="M109.700 148.300v-29.600a2 2 0 0 1 2-2h30a2 2 0 0 1 2 2v29.600z" fill="#0486a0"/>
      <path d="M0 148.300H275.700M41.300 148v4M84 148v4M126.300 148v4M169 148v4M211.300 148v4M254 148v4" fill="none" stroke="#46536a" stroke-width=".8"/>
      <g font-size="6" fill="#b3bfce" text-anchor="end"><text transform="translate(43.500 157) rotate(-20)">LANDSLIDE</text><text transform="translate(85.500 157) rotate(-20)">TORNADO</text><text transform="translate(128.500 157) rotate(-20)">SINKHOLE</text><text transform="translate(171 157) rotate(-20)">TSUNAMI</text><text transform="translate(213.500 157) rotate(-20)">WILDFIRE</text><text transform="translate(256 157) rotate(-20)">BLIZZARD</text></g>
      <g font-size="6.400" fill="#8797ae"><text x="2" y="206.300" textLength="43.500" lengthAdjust="spacingAndGlyphs">EARTHQUAKE:</text><text x="2" y="220.300" textLength="30.500" lengthAdjust="spacingAndGlyphs">TSUNAMI:</text><text x="99.300" y="206.300" textLength="37" lengthAdjust="spacingAndGlyphs">LANDSLIDE:</text><text x="99.300" y="220.300" textLength="31" lengthAdjust="spacingAndGlyphs">WILDFIRE:</text><text x="197" y="206.300" textLength="34" lengthAdjust="spacingAndGlyphs">TORNADO:</text><text x="197" y="220.300" textLength="32" lengthAdjust="spacingAndGlyphs">BLIZZARD:</text>
      <g fill="#e6ebf2" font-weight="600"><text x="49.300" y="206.300">3</text><text x="37" y="220.300">0</text><text x="140.500" y="206.300">0</text><text x="134.700" y="220.300">0</text><text x="235.500" y="206.300">0</text><text x="233.500" y="220.300">0</text></g>
      <g fill="#62748e"><text x="58.300" y="206.300" textLength="17" lengthAdjust="spacingAndGlyphs">(50%)</text><text x="46" y="220.300" textLength="13.300" lengthAdjust="spacingAndGlyphs">(0%)</text><text x="149" y="206.300" textLength="13.300" lengthAdjust="spacingAndGlyphs">(0%)</text><text x="143" y="220.300" textLength="13.300" lengthAdjust="spacingAndGlyphs">(0%)</text><text x="244" y="206.300" textLength="13.300" lengthAdjust="spacingAndGlyphs">(0%)</text><text x="242" y="220.300" textLength="13.300" lengthAdjust="spacingAndGlyphs">(0%)</text></g></g>
      <circle cx="92.300" cy="204" r="2.300" fill="#22c55e"/><circle cx="92.300" cy="218" r="2.300" fill="#fbbf24"/><circle cx="190" cy="204" r="2.300" fill="#ef4444"/><circle cx="190" cy="218" r="2.300" fill="#b45309"/>
    </svg>
  </div>
  <div class="zones z7">
    <div class="zone"><b>3. Bangalore Flood Zone</b><p>Requests: <strong>1</strong></p><div class="bars"><i style="height:20px"></i><i style="height:6px"></i><i style="height:4px"></i><i style="height:17px"></i><i style="height:25.700px"></i><i style="height:18px"></i><i style="height:5px"></i><i style="height:5px"></i><i style="height:19px"></i><i style="height:25.700px"></i></div></div>
    <div class="zone"><b>4. Kolkata Flood Zone</b><p>Requests: <strong>1</strong></p><div class="bars"><i style="height:6px"></i><i style="height:4px"></i><i style="height:17px"></i><i style="height:25.700px"></i><i style="height:18px"></i><i style="height:5px"></i><i style="height:5px"></i><i style="height:19px"></i><i style="height:25.700px"></i><i style="height:15.700px"></i></div></div>
    <div class="zone"><b>5. Delhi Summer Heatwave</b><p>Requests: <strong>1</strong></p><div class="bars"><i style="height:4px"></i><i style="height:17px"></i><i style="height:25.700px"></i><i style="height:18px"></i><i style="height:5px"></i><i style="height:5px"></i><i style="height:19px"></i><i style="height:25.700px"></i><i style="height:15.700px"></i><i style="height:4px"></i></div></div>
  </div>
</section>

<!-- Edit profile, user -->
<section class="tile t8">
  <div class="dialog pf"><div class="inp">Devansh</div><div class="inp">8954322550</div><div class="inp area">Budh Vihar, Phase-1, Delhi - 86<u></u><svg class="grip" viewBox="0 0 8 8"><path d="M1 7l6-6M5 7l2-2"/></svg></div>
    <p>Email: <b>devanshsiglasingla@gmail.com</b></p><p>Role: <b>USER</b></p><div class="acts"><i>Cancel</i><i class="go">Save</i></div></div>
</section>

<!-- Map overview -->
<section class="tile t9">
  <div class="t9-head"><h3>Map Overview</h3><p>Geographic distribution of disaster zones in India</p></div>
  <svg viewBox="30 114 1404 625" width="468" height="208.300">
    <use href="#india"/>
    <g stroke-width="4" fill-opacity=".35"><g fill="#f59e0b" stroke="#f59e0b"><circle cx="744" cy="136" r="17"/><circle cx="682" cy="114" r="11"/><circle cx="691" cy="180" r="15"/><circle cx="611" cy="231" r="17"/><circle cx="823" cy="281" r="6"/><circle cx="1101" cy="275" r="4"/><circle cx="1177" cy="257" r="3"/><circle cx="656" cy="366" r="7"/><circle cx="700" cy="347" r="6"/><circle cx="861" cy="513" r="5"/><circle cx="608" cy="582" r="4"/><circle cx="668" cy="734" r="10"/></g>
    <g fill="#ef4444" stroke="#ef4444"><circle cx="691" cy="180" r="6"/><circle cx="490" cy="334" r="13"/><circle cx="913" cy="275" r="5"/><circle cx="1000" cy="232" r="3"/><circle cx="1010" cy="222" r="2"/><circle cx="1088" cy="276" r="3"/><circle cx="1159" cy="299" r="2"/><circle cx="565" cy="354" r="7"/><circle cx="584" cy="376" r="5"/><circle cx="574" cy="472" r="3"/><circle cx="601" cy="488" r="6"/><circle cx="933" cy="450" r="9"/><circle cx="782" cy="646" r="6"/><circle cx="705" cy="648" r="6"/><circle cx="1123" cy="682" r="27"/></g>
    <g fill="#10b981" stroke="#10b981"><circle cx="578" cy="257" r="6"/><circle cx="797" cy="237" r="6"/><circle cx="918" cy="344" r="3"/><circle cx="728" cy="340" r="2"/><circle cx="1004" cy="369" r="7"/><circle cx="746" cy="410" r="4"/><circle cx="573" cy="409" r="4"/><circle cx="729" cy="520" r="12"/><circle cx="766" cy="677" r="4"/></g></g>
    <g><use href="#pb" x="745" y="136"/><use href="#pb" x="691" y="176"/><use href="#pb" x="611" y="229"/><use href="#pb" x="578" y="254"/><use href="#pb" x="797" y="234"/><use href="#pb" x="823" y="278"/><use href="#pb" x="913" y="273"/><use href="#pb" x="1008" y="214"/><use href="#pb" x="1001" y="228"/><use href="#pb" x="1098" y="256"/><use href="#pb" x="1103" y="273"/><use href="#pb" x="1087" y="277"/><use href="#pb" x="1177" y="256"/><use href="#pb" x="1159" y="297"/><use href="#pb" x="491" y="330"/><use href="#pb" x="565" y="351"/><use href="#pb" x="582" y="373"/><use href="#pb" x="727" y="337"/><use href="#pb" x="700" y="345"/><use href="#pb" x="656" y="361"/><use href="#pb" x="918" y="342"/><use href="#pb" x="1004" y="366"/><use href="#pb" x="572" y="408"/><use href="#pb" x="746" y="408"/><use href="#pb" x="933" y="447"/><use href="#pb" x="574" y="470"/><use href="#pb" x="601" y="486"/><use href="#pb" x="861" y="510"/><use href="#pb" x="729" y="518"/><use href="#pb" x="608" y="579"/><use href="#pb" x="780" y="642"/><use href="#pb" x="705" y="645"/><use href="#pb" x="678" y="664"/><use href="#pb" x="766" y="674"/><use href="#pb" x="680" y="690"/><use href="#pb" x="687" y="701"/><use href="#pb" x="690" y="727"/><use href="#pb" x="669" y="732"/><use href="#pb" x="1123" y="680"/><use href="#pb" x="686" y="770"/></g>
    <g><rect x="36" y="128" width="38" height="74" rx="5" fill="#fff" stroke="#bbb" stroke-width="2"/><path d="M38 165h34" stroke="#ccc" stroke-width="2"/><path d="M48 148h14M55 141v14M48 184h14" stroke="#000" stroke-width="3"/></g>
    <rect x="1178" y="718" width="260" height="22" fill="#fff" opacity=".82"/><path d="M1185 722h13v5h-13z" fill="#4c7be1"/><path d="M1185 727h13v5h-13z" fill="#ffd500"/><text x="1203" y="732" font-size="14" fill="#0078a8" textLength="45">Leaflet</text><text x="1251" y="732" font-size="14" fill="#333" textLength="196">| © OpenStreetMap contributors</text>
  </svg>
</section>

<!-- Safety tips -->
<section class="tile t10">
  <div class="tc left">
    <div class="ltip"><b class="cut w1">Stay Away From Flood Water</b><p class="cut w2">Never walk or drive through floodwaters. Even shallow water can sweep you off your feet or hide</p><p class="cut w3">hazards. Keep children and pets away from water.</p></div>
    <div class="ltip l2"><b class="cut w1"></b><p class="cut w4">Use a battery powered weak radio to monitor flood warnings. Follow evacuation orders</p><p class="cut w5">during high water conditions.</p></div>
    <div class="ltip l3"><b class="cut w1"></b><p class="cut w6">Move valuables up if flooding is imminent. Avoid contact with floodwaters, which may be</p></div>
    <div class="pager"><i class="off">‹</i><i class="on">1</i><i>2</i><i>›</i></div>
  </div>
  <div class="tc right">
    <h2><svg class="ic"><use href="#i-info"/></svg>General Safety Tips</h2>
    <div class="tip"><svg class="ic"><use href="#i-info"/></svg><div><b>Stay Calm During Floods</b><p>Keep a battery-powered radio and stay tuned to local weather updates<br>roads.</p></div></div>
    <div class="tip s"><svg class="ic"><use href="#i-info"/></svg><div><b>General Flood Tip</b><p>Do not touch electrical equipment if you are wet or standing in water.</p></div></div>
  </div>
</section>

<!-- Requests list -->
<section class="tile t11">
  <div class="reqs">
    <h2><svg class="ic"><use href="#i-alert"/></svg>Requests</h2>
    <div class="req"><div><b><svg class="ic"><use href="#i-alertc"/></svg>Wildfire approaching houses</b><p>User ID: 10</p><p>Outside any zone</p><p class="d">8/9/2025, 6:41:59 pm</p><p>Outside any zone</p><i class="chip">No Zone</i></div><i class="pill p-h">HANDLING</i><span class="sel">HANDLING<svg class="ic"><use href="#i-chev"/></svg></span></div>
    <div class="req"><div><b><svg class="ic"><use href="#i-alertc"/></svg>Landslide blocked road, people stuck in vehicles</b><p>User ID: 5</p><p>Outside any zone</p><p class="d">8/9/2025, 6:41:59 pm</p><p>Outside any zone</p><i class="chip">No Zone</i></div><i class="pill p-h">HANDLING</i><span class="sel">HANDLING<svg class="ic"><use href="#i-chev"/></svg></span></div>
    <div class="req"><div><b><svg class="ic"><use href="#i-alertc"/></svg>Earthquake tremors, need medical help</b><p>User ID: 11</p><p>Outside any zone</p><p class="d">8/9/2025, 6:41:59 pm</p><p>Outside any zone</p><i class="chip">No Zone</i></div><i class="pill p-p">PENDING</i><span class="sel">PENDING<svg class="ic"><use href="#i-chev"/></svg></span></div>
    <div class="req"><div><b><svg class="ic"><use href="#i-alertc"/></svg>Strong tornado winds, shelter destroyed</b><p>User ID: 12</p><p>Outside any zone</p></div><i class="pill p-p">PENDING</i><span class="sel">PENDING<svg class="ic"><use href="#i-chev"/></svg></span></div>
  </div>
</section>

<!-- Profile -->
<section class="tile t12">
  <nav><b>DISASTER PWA</b><a>Dashboard</a><a>Disaster Zones</a><a>SOS Requests</a><span class="me"><i>D</i>DEVANSHSIGLASINGLA<svg class="ic"><use href="#i-chev"/></svg></span></nav>
  <div class="prof"><div class="ph"><h2><svg class="ic"><use href="#i-user"/></svg>Profile</h2><i class="btn"><svg class="ic"><use href="#i-pencil"/></svg>Edit</i></div>
    <p><svg class="ic"><use href="#i-user"/></svg>Devansh</p><p><svg class="ic"><use href="#i-mail"/></svg>devanshsiglasingla@gmail.com</p><p><svg class="ic"><use href="#i-phone"/></svg>8954322550</p><p><svg class="ic"><use href="#i-pin"/></svg>Budh Vihar, Phase-1, Delhi - 86</p><p><svg class="ic"><use href="#i-shield"/></svg>Role: USER</p></div>
  <div class="mine"><h2>My SOS Requests</h2><div><b>We are stuck on the roof</b><em>• PENDING • 16/9/2025, 5:44:33 pm</em></div><div><b>Building Collapsed</b><em>• PENDING • 16/9/2025, 5:46:10 pm</em></div></div>
</section>

<!-- Zones management -->
<section class="tile t13">
  <nav><b>DISASTER PWA</b><a>Dashboard</a><a class="on">Disaster Zones</a><a>SOS Requests</a><span class="me"><i>A</i>ADMIN<svg class="ic"><use href="#i-chev"/></svg></span></nav>
  <div class="hd"><div><h1>Disaster Zones Management</h1><p>View, add, and manage disaster zones</p></div><i class="btn">Back to Dashboard</i></div>
  <div class="filters"><span class="q"><svg class="ic"><use href="#i-filter"/></svg>Search by zone name</span><span class="s">Filter by disaster type<svg class="ic"><use href="#i-chev"/></svg></span><span class="s s2">Filter by danger level<svg class="ic"><use href="#i-chev"/></svg></span><span class="r">Reset Filters</span><i class="btn"><svg class="ic"><use href="#i-plus"/></svg>New Zone</i></div>
  <div class="zgrid">
    <article><div class="zt"><b>Mumbai Flood Zone</b><i class="pill p-p">HIGH</i></div><em>FLOOD</em><div class="zc"><span>Center (lat,lng)<br><u>19.0800, 72.8800</u></span><span>Radius<br><u>15.5 km</u></span></div>
      <svg class="zm" viewBox="0 0 286 176"><rect width="286" height="176" fill="#f2efe9"/><path d="M0 0H110l8 40 12 30-20 30 30 40 20 36H0z" fill="#aad3df"/><g fill="#cde3bb"><path d="M180 10l60 0 46 40v40l-60-30zM230 110l56 10v50l-70-30z"/></g><path d="M150 0l-30 50 60 60 40 66M120 60l70 10 96-20M180 110l60-20 46 10M200 0l-20 70" fill="none" stroke="#ee9c80" stroke-width="2"/><path d="M50 0l30 90-10 86" stroke="#9bb0c8" stroke-width="2" fill="none"/><circle cx="144" cy="88" r="31" fill="#ef4444" fill-opacity=".45" stroke="#e5404a" stroke-width="3"/><g class="city"><text x="96" y="20" textLength="72">Vasai-Virar</text><text x="155" y="46" textLength="44">Thane</text><text x="116" y="100" textLength="52">Mumbai</text><text x="190" y="80" textLength="50">Badlapur</text></g><use href="#pb" transform="translate(144 88)"/><use href="#zoomctl"/><use href="#attr"/></svg>
      <div class="zb"><i><svg class="ic"><use href="#i-pencil"/></svg>Edit</i><i class="del"><svg class="ic"><use href="#i-trash"/></svg>Delete</i><i class="vw"><svg class="ic"><use href="#i-eye"/></svg>View Details</i></div></article>
    <article><div class="zt"><b>Delhi Earthquake Zone</b><i class="pill p-h">MEDIUM</i></div><em>EARTHQUAKE</em><div class="zc"><span>Center (lat,lng)<br><u>28.7000, 77.1000</u></span><span>Radius<br><u>50 km</u></span></div>
      <svg class="zm" viewBox="0 0 286 176"><rect width="286" height="176" fill="#f2efe9"/><circle cx="144" cy="88" r="103" fill="#f59e0b" fill-opacity=".33" stroke="#f0a020" stroke-width="3"/><path d="M0 40L144 90 286 20M144 90L60 0M144 90l60 86M144 90L80 176M144 90L220 0M60 60q84-60 160 0t-20 90-110-10-30-80M0 120l80-20M200 110l86 40" fill="none" stroke="#e69a6c" stroke-width="2"/><g class="city"><text x="110" y="26" textLength="42">Sonipat</text><text x="250" y="26">Meerut</text><text x="72" y="94" textLength="76">Bahadurgarh</text><text x="128" y="114" textLength="70">New Delhi</text><text x="92" y="150" textLength="66">Gurugram</text></g><use href="#pb" transform="translate(144 88)"/><use href="#zoomctl"/><use href="#attr"/></svg>
      <div class="zb"><i><svg class="ic"><use href="#i-pencil"/></svg>Edit</i><i class="del"><svg class="ic"><use href="#i-trash"/></svg>Delete</i><i class="vw"><svg class="ic"><use href="#i-eye"/></svg>View Details</i></div></article>
    <article><div class="zt"><b>Chennai Tsunami Risk Zone</b><i class="pill p-p">HIGH</i></div><em>TSUNAMI</em><div class="zc"><span>Center (lat,lng)<br><u>13.0800, 80.2700</u></span><span>Radius<br><u>30 km</u></span></div>
      <svg class="zm" viewBox="0 0 286 176"><rect width="286" height="176" fill="#f2efe9"/><path d="M118 0L145 60 142 110 130 176H286V0z" fill="#aad3df"/><path d="M0 130l60-30 84-10M60 176l40-70 20-106M0 60l110 20M20 176l50-20 70-60" fill="none" stroke="#ee9c80" stroke-width="2"/><path d="M190 0l20 60-20 116" stroke="#9aa4c8" stroke-width="2" fill="none"/><circle cx="144" cy="88" r="56" fill="#ef4444" fill-opacity=".43" stroke="#e5404a" stroke-width="3"/><g class="city"><text x="116" y="94" textLength="54">Chennai</text><text x="84" y="128" textLength="54">Tambaram</text><text x="2" y="144" textLength="66">Kancheepuram</text></g><use href="#pb" transform="translate(144 88)"/><use href="#zoomctl"/><use href="#attr"/></svg>
      <div class="zb"><i><svg class="ic"><use href="#i-pencil"/></svg>Edit</i><i class="del"><svg class="ic"><use href="#i-trash"/></svg>Delete</i><i class="vw"><svg class="ic"><use href="#i-eye"/></svg>View Details</i></div></article>
    <article><div class="zt"><b>Kolkata Flood Zone</b><i class="pill p-c">LOW</i></div><em>FLOOD</em><div class="zc"><span>Center (lat,lng)<br><u>22.5700, 88.3600</u></span><span>Radius<br><u>25 km</u></span></div>
      <svg class="zm" viewBox="0 0 286 176"><rect width="286" height="176" fill="#f2efe9"/><path d="M100 0L144 88 60 176M144 88L286 60M144 88L0 100M180 0l-36 88 70 88M0 50l90 20" fill="none" stroke="#eeae7c" stroke-width="2"/><path d="M150 0q-20 60-10 90t-60 40-20 46" stroke="#aad3df" stroke-width="4" fill="none"/><path d="M220 20l-10 60 30 60M30 20l20 80-20 70" stroke="#c9a3d0" fill="none" stroke-width="1.500"/><circle cx="144" cy="88" r="49" fill="#10b981" fill-opacity=".25" stroke="#10b981" stroke-width="3"/><g class="city"><text x="126" y="34" textLength="50">Hugli</text><text x="186" y="34">Barasat</text><text x="108" y="94" textLength="62">Kolkata</text><text x="102" y="126" textLength="110">Rajpur Sonarpur</text><text x="184" y="150" textLength="44">Canning</text></g><use href="#pb" transform="translate(144 88)"/><use href="#zoomctl"/><use href="#attr"/></svg>
      <div class="zb"><i><svg class="ic"><use href="#i-pencil"/></svg>Edit</i><i class="del"><svg class="ic"><use href="#i-trash"/></svg>Delete</i><i class="vw"><svg class="ic"><use href="#i-eye"/></svg>View Details</i></div></article>
    <article><div class="zt"><b>Shimla Landslide Zone</b><i class="pill p-p">HIGH</i></div><em>LANDSLIDE</em><div class="zc"><span>Center (lat,lng)<br><u>31.1000, 77.1700</u></span><span>Radius<br><u>12 km</u></span></div><div class="zm land"></div></article>
    <article><div class="zt"><b>Hyderabad Earthquake Zone</b><i class="pill p-c">LOW</i></div><em>EARTHQUAKE</em><div class="zc"><span>Center (lat,lng)<br><u>17.3900, 78.4900</u></span><span>Radius<br><u>40 km</u></span></div><div class="zm land"></div></article>
    <article><div class="zt"><b>Goa Flood Zone</b><i class="pill p-h">MEDIUM</i></div><em>FLOOD</em><div class="zc"><span>Center (lat,lng)<br><u>15.3000, 74.1200</u></span><span>Radius<br><u>20 km</u></span></div><div class="zm land"></div></article>
    <article><div class="zt"><b>Pune Earthquake Zone</b><i class="pill p-p">HIGH</i></div><em>EARTHQUAKE</em><div class="zc"><span>Center (lat,lng)<br><u>18.5200, 73.8600</u></span><span>Radius<br><u>18 km</u></span></div><div class="zm land"></div></article>
  </div>
</section>

<!-- SOS requests map -->
<section class="tile t14">
  <nav><b>DISASTER PWA</b><a>Dashboard</a><a>Disaster Zones</a><a class="on">SOS Requests</a><span class="me"><i>A</i>ADMIN<svg class="ic"><use href="#i-chev"/></svg></span></nav>
  <div class="hd"><div><h1>SOS Requests</h1><p>View all SOS requests across India</p></div><div class="bs"><i class="btn">Refresh</i><i class="btn g">Add Request</i></div></div>
  <div class="f14"><label>Filter by Zone Name<span class="ph">e.g. Mumbai</span></label><label>Filter by Zone ID<span class="ph">e.g. 1</span></label><label>Filter by Disaster Type<span>All Types<svg class="ic"><use href="#i-chev"/></svg></span></label><label>Filter by Status<span>All Statuses<svg class="ic"><use href="#i-chev"/></svg></span></label><label class="rs"><span>Reset Filters</span></label></div>
  <div class="m14"><h2><svg class="ic"><use href="#i-pin"/></svg>India Map Overview</h2>
    <svg class="map14" viewBox="97 351 1250 450" width="416.700" height="150"><g transform="translate(59.400 310) scale(.86)"><use href="#india"/></g>
      <use href="#pr" x="644" y="405"/><use href="#shade" x="655" y="463"/><use href="#pb" x="651" y="463"/><use href="#pr" x="621" y="511"/><use href="#pr" x="674" y="503"/><use href="#pr" x="128" y="555"/><use href="#pr" x="410" y="566"/><use href="#pr" x="542" y="613"/><use href="#pr" x="549" y="662"/><use href="#pr" x="697" y="677"/><use href="#pr" x="922" y="626"/><use href="#pr" x="553" y="711"/><use href="#pr" x="574" y="729"/><use href="#pr" x="685" y="758"/><use href="#py" x="580" y="810"/>
      <rect x="110" y="365" width="32" height="65" rx="4" fill="#fff" stroke="#bbb" stroke-width="2"/><path d="M110 397h32" stroke="#ccc" stroke-width="2"/><path d="M119 382h13M125.500 376v13M119 413h13" stroke="#000" stroke-width="2.500"/>
    </svg></div>
</section>

<!-- New SOS dialog -->
<section class="tile t15">
  <div class="t15-a"></div><div class="t15-b"></div>
  <svg viewBox="0 54.300 468 203.700" width="468" height="203.700"><g transform="translate(-308.700 -9.900) scale(.7233)"><use href="#india"/></g><g transform="translate(99 250) scale(.66)"><use href="#pr"/></g><g transform="translate(387 260) scale(.66)"><use href="#pr"/></g><g transform="translate(-1 214) scale(.66)"><use href="#pr"/></g><rect y="54" width="468" height="205" opacity=".4"/></svg>
  <div class="dialog d15"><h2>New SOS Request</h2><div class="ta">Help building collapsed.<svg class="grip" viewBox="0 0 8 8"><path d="M1 7l6-6M5 7l2-2"/></svg></div><div class="se">SINKHOLE<svg class="ic"><use href="#i-chev"/></svg></div><div class="acts"><i>Cancel</i><i class="go">Send SOS</i></div></div>
</section>

<!-- Zone detail stats -->
<section class="tile t16">
  <div class="band"></div>
  <div class="r16"><p>evacuation</p><i></i></div><div class="r16 hl"><i class="g"></i></div><div class="r16 hl"><i class="y"></i></div>
  <div class="c16">
    <div class="k b0"><div></div><i><svg class="ic"><use href="#i-pin"/></svg></i></div>
    <div class="k b1"><div><b>6</b><em>Local Safety Tips</em></div><i><svg class="ic"><use href="#i-shield"/></svg></i></div>
    <div class="k b2"><div><b>2</b><em>General Safety Tips</em></div><i><svg class="ic"><use href="#i-info"/></svg></i></div>
    <div class="k b3"><div><b>3</b><em>SOS Requests</em></div></div>
  </div>
</section>

</main>
</body>
</html>
```
FILE: styles.css
```css
*{box-sizing:border-box;margin:0;padding:0}
html,body{width:1920px;height:1080px;overflow:hidden;background:#fff}
body{font-family:"Open Sans","Noto Sans",sans-serif;color:#e2e8f0;white-space:nowrap}
i,em{font-style:normal}
u{text-decoration:none}
h1,h2,h3,b,strong{font-weight:600}
.defs{position:absolute}
svg{display:block;flex:none}
svg text{font-family:"Open Sans","Noto Sans","Noto Sans CJK SC","DejaVu Sans",sans-serif}
.ic{fill:none;stroke:currentColor;stroke-width:2;stroke-linecap:round;stroke-linejoin:round}
.city text{font-size:14px;fill:#4a4a4a}
.state text{font-size:12.5px;fill:#a079b3}
.city.sm text{font-size:4.8px}
.state.sm text{font-size:3.6px}

.board{display:grid;grid-template-columns:repeat(4,468px);grid-template-rows:repeat(4,258px);justify-content:space-between;align-content:space-between;width:1920px;height:1080px;padding:10px}
.tile{position:relative;overflow:hidden;background:#020618}
.dialog{position:absolute;background:#0f172b;border:1px solid #1d293d}
.pill{display:inline-flex;align-items:center;justify-content:center;border-radius:99px;font-weight:600;border:.5px solid}
.p-h{background:#2b2118;border-color:#4a3514;color:#f0b100}
.p-c{background:#0a2a28;border-color:#0d4234;color:#05df72}
.p-x{background:#1d293d;border-color:#314158;color:#cad5e2}
.p-p{background:#37101f;border-color:#52172a;color:#ff6467}
.btn{display:inline-flex;align-items:center;justify-content:center;background:#4f39f6;color:#fff}

/* dashboard */
.strip{height:5px;background:linear-gradient(90deg,#155dfc,#4f39f6);display:flex;justify-content:space-between;padding:0 8px 0 65px}
.strip-on{width:35px;height:1px;background:#1447e6}
.strip-pill{width:45px;height:2px;background:#6b5cf8;border-radius:0 0 4px 4px}
.t1-head{display:flex;gap:4.7px;padding:9px 0 0 5px;height:42px}
.logo{width:18px;height:18px;border-radius:5px;background:linear-gradient(135deg,#155dfc,#4f39f6);display:grid;place-items:center;color:#dbe6ff}
.logo .ic{width:8px;height:8px}
.t1-head h1{font-size:13.4px;line-height:15px;margin-top:.8px;font-weight:700;color:#f8fafc;letter-spacing:-.12px}
.t1-head p{font-size:5px;line-height:7px;margin-top:.3px;color:#8a99b0}
.stats{display:grid;grid-template-columns:repeat(4,1fr);gap:5.5px;padding:0 6px 0 4.7px;height:49px}
.stat{border:.7px solid;border-radius:6px;padding:8.5px;display:flex;gap:4.6px}
.stat span{width:15.7px;height:16px;border-radius:3px;display:grid;place-items:center}
.stat .ic{width:9px;height:9px}
.stat div{display:flex;flex-direction:column}
.stat b{font-size:4.8px;line-height:7px}
.stat strong{font-size:10.4px;line-height:12px;font-weight:700;margin-top:2.5px}
.stat em{font-size:4.7px;line-height:7px;margin-top:1.6px}
.blue{background:#091230;border-color:#13234f;color:#51a2ff}
.blue b{color:#8ec5ff}
.blue strong{color:#bedbff}
.blue span{background:#0f1d47}
.amber{background:#160d13;border-color:#4f2d12;color:#f0b100}
.amber b{color:#fdc700}
.amber strong{color:#fff085}
.amber span{background:#2c1b13}
.red{background:#1f0614;border-color:#4f0e1f;color:#ff6467}
.red b{color:#ffa2a2}
.red strong{color:#ffc9c9}
.red span{background:#3c0a18}
.green{background:#02141b;border-color:#04332c;color:#00d492}
.green b{color:#5ee9b5}
.green strong{color:#a4f4cf}
.green span{background:#032825}
.t1-cols{display:flex;gap:8.6px;padding:9.3px 6px 0 4.7px}
.recent{width:302px;height:170px;background:#0f172b;border-radius:6px;overflow:hidden;flex:none}
.recent h2{height:16.7px;background:#172135;display:flex;align-items:center;gap:3.5px;padding-left:6.5px;font-size:5px}
.recent h2 .ic{width:5.5px;height:5.5px;color:#615fff}
.recent p{font-size:4.8px;line-height:7px;margin:3.3px 0 0 6.1px;color:#6d7e97}
.tr{display:grid;grid-template-columns:33.2px 36px 131px 55.7px 1fr;align-items:center;height:24px;padding-left:6.1px;border-bottom:.6px solid #1a2438;font-size:5px;color:#cad5e2}
.tr.th{height:17.2px;font-weight:600;font-size:4.8px;padding-top:2.5px}
.tr .pill{height:9.5px;padding:0 3.5px;font-size:4.7px}
.tr time{line-height:7px;color:#8292aa}
.panel{width:146.7px;background:#0f172b;border:.6px solid #1a2438;border-radius:6px;padding:5px 6px}
.panel h3{font-size:5.1px;line-height:7px}
.panel p{font-size:4.7px;line-height:6.5px;margin-top:.7px;color:#8292aa}
.act{height:126.4px;margin-bottom:9.3px}
.act .chart{margin:3.3px 0 0 -6.6px}
.qa{height:60px}

/* new zone dialog */
.t2{background:#01030c}
.t2-bar{height:12px;background:#05080f;border-bottom:1px solid #0b111c}
.t2-card{margin:18px 0 0 7.3px;width:461px;height:260px;border:1px solid #080d17;border-radius:13px;background:#05080f;padding:12px 11px 0 12px;color:#4c545f;font-size:8.8px}
.t2-row{display:flex;justify-content:space-between}
.t2-row b{line-height:17px;color:#838990}
.t2-row .pill{height:16px;padding:0 7px;background:#190a0e;border-color:#2b0f15;color:#873538;font-size:8.3px}
.t2-card p{line-height:11px}
.t2-card .gap{margin-top:10px}
.t2-card .v{color:#6a727d}
.t2-map{margin-top:10px;border-radius:4px}
.t2-foot{display:flex;justify-content:space-between;margin-top:12px}
.t2-foot i{width:60px;height:20px;border-radius:4px;background:#0c1119;padding:6px 11px}
.t2-foot i.v{background:#251b73;font-size:7px;text-align:right;padding:5px 8px;color:#8886b5}
.t2-foot .ic{width:8px;height:8px}
.d2{left:41px;top:-1px;width:394.7px;height:260px}
.d2-head{height:13.5px;border-bottom:1px solid #1d293d}
.d2-body{display:grid;grid-template-columns:179.7px 179.7px;gap:9.4px 9px;padding:13.2px 12px 0;height:230px;align-content:start}
.wide{grid-column:1/3}
.d2 label{font-size:8.5px;line-height:13px;color:#cad5e2}
.d2 label span{display:flex;align-items:center;height:29px;margin-top:1.8px;border:1px solid #1d293d;border-radius:4.5px;background:#020618;padding-left:8.7px;font-size:9.5px;color:#e2e8f0;margin-bottom:.3px}
.d2 label .sel{justify-content:space-between;padding:0 3px 0 11.7px}
.d2 .sel .ic{width:8px;height:8px;stroke-width:3.5}
.d2 label .focus{outline:1.5px solid #e8e8e8;border-color:#101010}
.d2-foot{display:flex;justify-content:flex-end;gap:6px;border-top:1px solid #1d293d;padding:9.5px 12px 0}
.d2-foot i{width:46.7px;height:25px;border:1px solid #1d293d;border-radius:4.5px;background:#0b1223}
.d2-foot .go{width:38.4px;background:#4f39f6;border:0}

/* charts with ranked zones */
.legendbar{height:62px;background:#0f172b;border-bottom:1px solid #151f33;display:flex;gap:9.6px;padding-top:1px}
.lbox{flex:none;height:51.3px;background:#060b1c;border:1px solid #162033;border-radius:3px;font-size:6.2px;color:#b4c0cf}
.lb1{width:213.7px;border-left:0;display:flex;padding-top:20px;line-height:9px}
.lb1 .done{width:39.3px;display:flex;margin-left:-1px}
.lb1 i{width:7px;height:7px;border-radius:50%;background:#2b7fff;margin:1px 4.3px 0 1px}
.lb2{width:260px;padding:6px;border-right:0}
.lb2 b{display:block;font-size:6.1px;line-height:10px;color:#e2e8f0}
.types{display:flex;gap:7px;margin-top:4px;line-height:9px;height:11.5px}
.types span{display:flex;gap:2.6px}
.types .ic{width:8px;height:8px}
.t3-main{display:flex;gap:13px;padding-top:13px}
.chartcard{flex:none;width:281px;height:174px;background:#0f172b;border:1px solid #131d31;border-left:0;border-radius:0 6px 6px 0}
.chartcard svg{margin-top:-1px}
.zones{width:180px;flex:none}
.zones h2{font-size:8.6px;line-height:12px;margin:3px 0 10.3px}
.zone{height:72.3px;margin-bottom:8.9px;width:190px;border:1px solid #152035;border-radius:6px;background:linear-gradient(150deg,#0d162a,#020618 85%);padding:9px 8.7px}
.zone b{display:block;font-size:7.8px;line-height:12px;margin-top:.5px}
.zone p{font-size:7.1px;line-height:12px;color:#7688a2}
.zone strong{color:#e2e8f0}
.bars{display:flex;align-items:flex-end;gap:2.35px;height:26px;margin-top:3px}
.bars i{width:4.35px;border-radius:2px;background:#251e7e}
.t7{display:flex;gap:13.3px;padding-top:7.3px}
.c7{width:296px;height:229.4px}
.z7{padding-top:1.3px}
.z7 .zone{height:75px;margin-bottom:9px}
.z7 b{font-size:8px}
.z7 .bars{gap:2.5px;margin-top:5px}

/* profile dialogs */
.t4{background:radial-gradient(circle at 3px 188px,#14161d,transparent 14px),#010207}
.t8{background:radial-gradient(ellipse at 8px 192px,#17191f,transparent 30px),#010308}
.pf{top:-1px;height:262px}
.pf .inp{display:flex;align-items:center;position:relative;background:#1d293d;border:1px solid #314158;border-radius:6px;color:#d5dde8}
.pf .area{align-items:flex-start}
.grip{position:absolute;right:2px;bottom:1px;width:7px;height:7px;fill:none;stroke:#d5dde8;stroke-width:1}
.pf p{color:#7486a0}
.pf p b{font-weight:400;color:#e2e8f0}
.pf .acts{display:flex;justify-content:flex-end}
.pf .acts i{height:42px;border-radius:5px;background:#314158;text-align:center;color:#dfe5ee}
.pf .acts i.go{background:#4f39f6}
.t4 .pf{left:15px;width:439px;padding:10px 23px 0;border-color:#27344b}
.t4 .inp{height:41px;margin-bottom:11px;padding:0 0 1.5px 12px;font-size:14.8px}
.t4 .area{height:65px;padding-top:9.5px;line-height:20px;margin:12.3px 0 16.8px}
.t4 p{font-size:13px;line-height:20px}
.t4 .acts{gap:8px;margin-top:12.4px}
.t4 .acts i{width:77.3px}
.t4 .acts i.go{width:64px}
.t8 .pf{left:34.7px;width:406.3px;padding:20.9px 22px 0 21.3px}
.t8 .inp{height:38px;margin-bottom:10px;padding:0 0 1px 10.7px;font-size:13.7px}
.t8 .area{height:60px;padding-top:7px;line-height:20px;margin:11.5px 0 15.5px;border-color:#111;outline:1.5px solid #e4e4ff;box-shadow:0 0 0 2.5px #5b48f8}
.t8 .area u{width:1px;height:18px;margin-top:1px;background:#e2e8f0}
.t8 p{font-size:12.1px;line-height:19px}
.t8 .acts{gap:7px;margin-top:10px}
.t8 .acts i{width:72px;font-size:13.4px;line-height:31px}
.t8 .acts i.go{width:59px}

/* activity detail */
.panel5{width:434px;margin-left:15px;background:#0f172b;border:1px solid #1a2539}
.panel5.up{height:120.7px;border-top:0;border-radius:0 0 20px 20px}
.panel5.up svg{margin-left:-1px}
.panel5.down{height:140px;margin-top:26.3px;border-radius:20px 20px 0 0;padding:23px 17px 0}
.panel5 h3{font-size:13.9px;line-height:20px;margin-top:-3px}
.panel5 p{font-size:12.5px;line-height:20px;color:#7e8da5}
.qbtn{margin-top:11.5px;height:60px;border:1px solid #182a6b;border-radius:14px;background:#111b3d;display:flex;gap:12px;padding:9px 12px}
.qbtn span{width:41.6px;height:46px;border:1px solid #182a63;border-radius:10px;background:#0f172b;display:grid;place-items:center;color:#6fa8ee}
.qbtn .ic{width:19px;height:19px}
.qbtn b{display:block;font-size:14.8px;line-height:20px;margin-top:1px;color:#e2e8f0}
.qbtn em{display:block;font-size:12px;line-height:20px;margin-top:1px;color:#7e8da5}

/* zone detail */
.t6{background:#0f172b}
.t6 header{height:32px;display:flex;align-items:flex-start;padding-top:11px;line-height:11px;font-size:6.8px;color:#aeb9c8}
.t6 header b{width:74.5px;flex:none;display:flex;justify-content:flex-end;margin-right:6px;font-size:8.8px;color:#f1f5f9}
.t6 header i{margin-left:4px;height:8px;line-height:8px;padding:0 3px;border-radius:4px;background:#0a2f2a;color:#05df72;font-size:4.6px;font-weight:600;margin-top:1.5px}
.t6-map{height:186px;background:#1d293d;padding-top:27.3px}
.t6-map svg{border-top:1px solid #5a6472;border-bottom:1px solid #5a6472}
.t6-tips{display:flex;gap:13px;padding-top:12px}
.t6-tips div{flex:none;height:40px;background:#1d293d;font-size:7.7px;line-height:11px;padding-top:11px;display:flex}
.t6-tips .a{width:227px;border-radius:0 5px 0 0}
.t6-tips .a b{width:23px;display:flex;justify-content:flex-end}
.t6-tips .b{width:240px;border-radius:5px 0 0 0;padding-left:9.5px;gap:4.5px}
.t6-tips .ic{width:9px;height:9px;color:#00c950;margin-top:1px}

/* map overview */
.t9-head{height:33px;padding-top:12px;background:linear-gradient(#020618 0 7px,#0f172b 7px)}
.t9-head h3{width:35px;display:flex;justify-content:flex-end;font-size:5.2px;line-height:10px;height:9px;padding-top:1px}
.t9-head p{width:103px;display:flex;justify-content:flex-end;font-size:4.9px;line-height:8px;color:#62748e}
.t9>svg{border-bottom:7.7px solid #0f172b;height:216px}

/* safety tips */
.t10{background:#0f172b;display:flex;gap:15.3px;padding-top:7.7px}
.tc{flex:none;height:245.3px;background:#1d293d}
.tc.left{width:225px;border-radius:0 6px 6px 0;padding-top:38.5px}
.ltip{width:213px;height:51.3px;margin-bottom:8px;border-radius:0 5px 5px 0;background:#202c40;padding-top:9.5px}
.l2,.l3{background:none;border-bottom:1px solid #202c40}
.cut{display:flex;justify-content:flex-end}
.ltip b{font-size:7.5px;line-height:11px;height:11px;margin-bottom:3px}
.ltip p,.tip p{font-size:6.3px;line-height:9.7px;color:#75869e}
.w1{width:7.3px}
.w2{width:183.7px}
.w3{width:123px}
.w4{width:178px}
.w5{width:71px}
.w6{width:196.7px}
.pager{display:flex;gap:3px;padding-left:2.3px;margin-top:-.2px}
.pager i{width:16.4px;height:17.3px;border:1px solid #232f44;border-radius:2.5px;background:#0f172b;display:grid;place-items:center;font-size:6.2px;font-weight:600}
.pager .on{background:#4f39f6;border-color:#4f39f6}
.pager .off{opacity:.55}
.tc.right{width:240px;border-radius:6px 0 0 0;padding:11.5px 0 0 11.7px}
.tc.right h2{display:flex;align-items:center;gap:5.5px;font-size:10.1px;line-height:16px;font-weight:700;color:#f1f5f9;margin-bottom:10.8px}
.tc .ic{color:#00b34c}
.tc h2 .ic{width:11.5px;height:11.5px}
.tip{display:flex;gap:6px;width:240px;height:51.3px;margin-bottom:8px;border-left:2px solid #4589e0;border-radius:5px;padding:7.5px 0 0 7.5px}
.tip.s{height:41.7px}
.tip .ic{width:9.6px;height:9.6px}
.tip b{display:block;font-size:7.8px;line-height:11px;margin:2px 0 3px;color:#cad5e2}

/* requests */
.reqs{margin:6px 0 0 7.3px;width:452.7px;height:260px;background:#0f172b;border-radius:6px 6px 0 0;padding:0 7px 0 5px}
.reqs h2{display:flex;align-items:center;gap:3px;height:21.3px;padding:1px 0 0 1px;font-size:7.1px}
.reqs h2 .ic{width:7.5px;height:7.5px;color:#fb2c36}
.req{display:flex;height:62px;margin-bottom:4px;border:.8px solid #17213a;border-radius:5px;padding:6px 4.8px 0 6px}
.req>div{flex:1;padding-top:.4px}
.req b{display:flex;gap:3px;align-items:center;font-size:4.9px;line-height:8px;height:9px;color:#dbe2eb}
.req b .ic{width:6px;height:6px}
.req p{font-size:4.1px;line-height:7.6px;color:#70819b}
.req p.d{color:#52627a}
.chip{display:block;width:fit-content;background:#1d293d;border-radius:3px;height:7.5px;line-height:7.5px;padding:0 3.5px;font-size:4.6px;font-weight:600;margin-top:.5px}
.req .pill{height:8px;padding:0 3px;font-size:4.4px;margin:1.5px 3px 0 0}
.req .sel{width:40.4px;height:11px;border:.7px solid #1d293d;border-radius:3px;padding:0 2.5px 0 4.5px;display:flex;align-items:center;justify-content:space-between;font-size:4.4px;color:#cad5e2}
.req .sel .ic{width:4px;height:4px;stroke-width:3.5}

/* nav */
nav{display:flex;background:linear-gradient(90deg,#155dfc,#4f39f6);color:#fff;font-size:4.6px}
nav b{font-weight:600;font-size:7px;line-height:10px}
nav a{line-height:10px;font-weight:600;color:#dbeafe;border-radius:2px}
nav .on{background:#1447e6}
.me{display:flex;align-items:center;background:#6655f8;border-radius:99px;margin-left:auto;gap:2.7px}
.me i{width:9.5px;height:9.5px;border-radius:50%;background:#fff;color:#155dfc;display:grid;place-items:center;font-size:4px;font-weight:700}
.me .ic{width:4.5px;height:4.5px;margin-left:4px}
.t12 nav{height:17.3px;padding:2.3px 23.5px 0 4.3px}
.t12 nav b{width:63.1px;font-size:6.9px}
.t12 nav a:nth-of-type(1){width:35.5px}
.t12 nav a:nth-of-type(2){width:45.3px}
.t12 .me{width:83.8px;height:15px;margin-top:-2.3px;padding-left:5px}
.t12 h2{font-size:9.2px;line-height:14px}
.prof,.mine{width:324px;margin-left:62.5px;background:#0f172b;border:.7px solid #141e33;border-radius:5px;padding:0 9px}
.prof{height:105px;margin-top:14.7px}
.ph{display:flex;justify-content:space-between;padding:7.3px 0 4.5px 1px}
.ph h2{display:flex;gap:3.5px;align-items:center}
.ph h2 .ic{width:9px;height:9px;color:#615fff}
.ph .btn{width:24px;height:10.4px;border-radius:2px;font-size:4.5px;gap:1.5px;font-weight:600;margin-top:1px}
.ph .btn .ic{width:4.5px;height:4.5px}
.prof p{display:flex;align-items:center;gap:3.5px;height:14.5px;font-size:5.5px;color:#cad5e2}
.prof p .ic{width:5.4px;height:5.4px;color:#7486a0}
.mine{height:98.3px;margin-top:11.7px;padding-top:7px}
.mine h2{margin-bottom:7.5px}
.mine div{height:28px;margin-bottom:5px;background:#060b1c;border-radius:3px;padding:5.5px}
.mine b,.mine em{display:block}
.mine b{font-size:5.8px;line-height:9px}
.mine em{font-size:4.4px;line-height:7px;color:#7486a0}

/* zones management */
.t13 nav{height:15px;padding:0 9px 0 10.7px}
.t13 nav b,.t13 nav a{margin-top:-.5px}
.t13 nav b{width:60px;font-size:7.1px}
.t13 nav a{height:10.5px;padding:0 3.7px;margin-right:3px}
.t13 .me{width:49px;height:13.5px;margin-top:-1.5px;padding-left:5px}
.hd{display:flex;justify-content:space-between}
.hd h1{font-weight:700;color:#f8fafc}
.hd p{color:#7486a0;font-size:4.9px;line-height:7px}
.hd .btn{border-radius:2px;font-size:4.8px;font-weight:600}
.t13 .hd{padding:8.2px 9px 0 10.7px;height:39.7px}
.t13 .hd h1{font-size:11px;line-height:16px;letter-spacing:-.3px}
.t13 .hd .btn{width:57px;height:13px;margin-top:5.5px}
.filters{display:flex;height:27px;margin:0 9px 8.3px 10.7px;background:#0f172b;border-radius:5px;padding:6.5px 6px;font-size:5.1px;align-items:flex-start}
.filters>*{height:13.7px;border-radius:3px;display:flex;align-items:center;flex:none}
.filters .ic{width:4.5px;height:4.5px}
.filters .q{width:142.3px;background:#020618;color:#4c5c75;padding-left:4.5px;gap:4px;margin-right:3.7px}
.filters .q .ic{width:6px;height:6px}
.filters .s{width:69.6px;background:#020618;padding:0 2px 0 7px;justify-content:space-between;margin-right:4px;color:#b4c0cf}
.filters .s2{padding-left:6px;width:69px}
.filters .r{width:68.7px;border:.6px solid #1d293d;justify-content:center;margin:0 29.3px 0 .7px;color:#b4c0cf}
.filters .btn{width:44.3px;gap:4px;font-size:4.8px;font-weight:600}
.zgrid{display:grid;grid-template-columns:repeat(4,107.5px);justify-content:space-between;row-gap:5.7px;padding:0 9px 0 10.7px}
article{height:121.3px;background:#0f172b;border-radius:5px;padding:6px}
.zt{display:flex;justify-content:space-between;align-items:center;height:8.5px}
.zt b{font-size:5px;line-height:8px}
.zt .pill{height:7.3px;padding:0 3.5px;font-size:4.6px;font-weight:400;margin-top:-.5px}
article em{display:block;font-size:4.4px;line-height:6px;color:#70819b;height:9.5px}
.zc{display:grid;grid-template-columns:49px 1fr;font-size:4.4px;line-height:5.8px;color:#7486a0;height:16px}
.zc span{padding-top:1.5px}
.zc u{color:#c2cddb}
.zm{width:95.5px;height:58.7px;border-radius:3px;overflow:hidden}
.zm.land{background:#9db5a0}
.zb{display:flex;margin-top:6.3px}
.zb i{display:flex;align-items:center;justify-content:center;gap:2px;height:10.3px;width:21.5px;border-radius:2px;background:#1d293d;font-size:4.5px;font-weight:600;margin-right:3px}
.zb .del{width:27px;background:#e7000b;margin-right:5px}
.zb .vw{width:39px;background:#4f39f6;margin-right:0}
.zb .ic{width:4.7px;height:4.7px}

/* sos requests */
.t14 nav{height:12px;padding:0 18.3px 0 21.7px}
.t14 nav b,.t14 nav a{margin-top:-3px}
.t14 nav b{width:56.6px;font-size:6.7px}
.t14 nav a{height:11px;padding:0 3.7px;margin-right:3.7px;font-size:4.4px}
.t14 .me{width:46.7px;height:13px;margin-top:-4px;padding-left:5px;font-size:4.4px}
.t14 .hd{padding:10px 19px 0 21.7px;height:38px}
.t14 .hd h1{font-size:9.9px;line-height:14px;margin-bottom:1.5px}
.t14 .hd p{font-size:4.6px}
.bs{display:flex;gap:3px;margin-top:3px}
.t14 .btn{width:27.3px;height:12px}
.t14 .btn.g{width:40px;background:#1d293d}
.f14{display:grid;grid-template-columns:repeat(5,79.7px);justify-content:space-between;margin:0 19px 7.7px 21.3px;height:32.3px;background:#0f172b;border-radius:5px;padding:6px}
.f14 label{font-size:4.2px;line-height:7px;color:#8292aa}
.f14 span{display:flex;align-items:center;justify-content:space-between;height:12.4px;margin-top:.5px;background:#020618;border-radius:2.5px;padding:0 2px 0 4.7px;font-size:4.7px;color:#e2e8f0}
.f14 .ph{color:#45556c}
.f14 .ic{width:3.5px;height:3.5px;stroke-width:4}
.f14 .rs span{margin-top:7.5px;background:none;border:.6px solid #1d293d;justify-content:center;color:#b4c0cf}
.m14{margin:0 19px 0 21.3px;height:180px;background:#0f172b;border-radius:5px 5px 0 0;padding:6px 5.5px 0 6px}
.m14 h2{display:flex;gap:3px;align-items:center;font-size:7.1px;line-height:10px;height:14px;padding:0 0 3px 1px}
.m14 h2 .ic{width:6px;height:6px;color:#2b7fff}
.map14{border-radius:3px 3px 0 0}

/* new sos dialog */
.t15-a{height:9px;background:#01030c}
.t15-b{height:45.3px;background:#090e1a;border-top:1px solid #0e1420}
.d15{left:54.5px;top:-12px;width:359.5px;height:216.5px;border-radius:10px;padding:28px 20px 0;box-shadow:0 10px 24px rgba(0,0,0,.4)}
.d15 h2{font-size:13.5px;line-height:18px;margin-bottom:14.5px}
.d15 .ta{position:relative;height:46px;border:1px solid #27344b;border-radius:6px;background:#020618;padding:5px 9.5px;font-size:10.7px;line-height:18px}
.d15 .se{height:31px;margin-top:14px;outline:1.5px solid #dcdcdc;border-radius:6px;background:#020618;display:flex;align-items:center;justify-content:space-between;padding:0 3px 0 12.5px;font-size:10.6px}
.d15 .se .ic{width:8px;height:8px;stroke-width:3.5}
.d15 .acts{display:flex;justify-content:flex-end;gap:7px;margin-top:12.5px}
.d15 .acts i{width:62.5px;height:32px;border-radius:4.5px;background:#1d293d;text-align:center;font-size:12px;line-height:31px}
.d15 .acts .go{width:80.7px;background:#4f39f6}

/* zone stats */
.t16{background:#0f172b}
.band{margin-top:9px;height:31.3px;background:#1d293d;border-top:1px solid #233048}
.r16{height:36.5px;background:#0f172b;display:flex;justify-content:space-between;padding-top:7.5px;font-size:4.6px;line-height:8px;color:#8b9ab0}
.r16 i{width:12px;height:8px;border-radius:5px 0 0 5px;background:#1d293d;border:.6px solid #314158;margin-right:-7px;margin-left:auto}
.r16 p{width:18px;display:flex;justify-content:flex-end}
.r16.hl{background:#151e36;border-top:5px solid #1d293d;height:41.5px}
.r16 .g{background:#0d542b;border-color:#0a7a3a}
.r16 .y{background:#3d3013;border-color:#8a6410}
.r16:nth-child(4){border-bottom:9.3px solid #1d293d;height:51px}
.c16{display:grid;grid-template-columns:64.3px 155.5px 154.8px 155px;gap:9.2px;padding-top:35.5px}
.k{height:46px;border:.8px solid;border-radius:5px;display:flex;justify-content:space-between;padding:10px}
.k b{display:block;font-size:10.5px;line-height:14px;font-weight:700;color:#fff}
.k em{display:block;font-size:4.9px;line-height:8px;margin-top:1px;color:#90a1b9}
.k i{width:23px;height:23.7px;border-radius:4px;display:grid;place-items:center}
.k .ic{width:12px;height:12px}
.b0{background:#10193b;border-color:#17276a;border-left:0;border-radius:0 5px 5px 0}
.b0 i{background:#172f63;color:#51a2ff}
.b1{background:linear-gradient(135deg,#231c24,#1a1a28);border-color:#3a2a20}
.b1 i{background:#3f3219;color:#fdc700}
.b2{background:linear-gradient(135deg,#0d2430,#0f1d2e);border-color:#10403a}
.b2 i{background:#0a4535;color:#05df72}
.b3{background:linear-gradient(90deg,#251331,#1b152e);border-color:#441942}
```
